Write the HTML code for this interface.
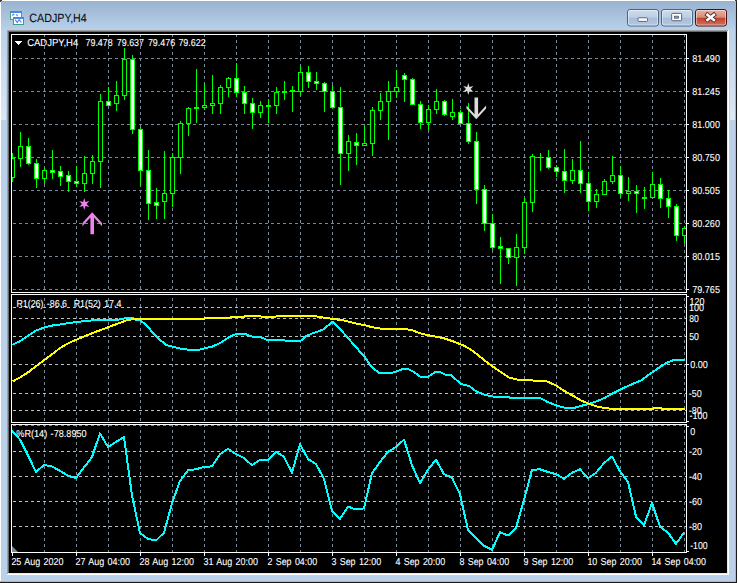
<!DOCTYPE html>
<html lang="en"><head><meta charset="utf-8"><title>CADJPY,H4</title>
<style>
html,body{margin:0;padding:0;background:#ffffff;overflow:hidden}
svg{display:block;font-family:"Liberation Sans",sans-serif}
text{text-rendering:geometricPrecision}
text.w{word-spacing:1px}
</style></head><body>
<svg width="739" height="583" viewBox="0 0 739 583">
<defs>
<linearGradient id="tg" x1="0" y1="0" x2="0" y2="1"><stop offset="0" stop-color="#98b3d0"/><stop offset="1" stop-color="#b9d1ea"/></linearGradient>
<linearGradient id="bt" x1="0" y1="0" x2="0" y2="1"><stop offset="0" stop-color="#cfdcec"/><stop offset="0.48" stop-color="#bccee4"/><stop offset="0.5" stop-color="#a6bcd8"/><stop offset="1" stop-color="#b4c9e2"/></linearGradient>
<linearGradient id="bc" x1="0" y1="0" x2="0" y2="1"><stop offset="0" stop-color="#eab3a6"/><stop offset="0.48" stop-color="#d98a78"/><stop offset="0.5" stop-color="#c2402a"/><stop offset="1" stop-color="#d4755f"/></linearGradient>
<linearGradient id="sg" gradientUnits="userSpaceOnUse" x1="0" y1="30" x2="0" y2="120"><stop offset="0" stop-color="#bbd2ea"/><stop offset="1" stop-color="#dce8f4"/></linearGradient>
<clipPath id="cm"><rect x="12" y="35" width="674" height="257"/></clipPath>
<clipPath id="c1"><rect x="12" y="295" width="674" height="127"/></clipPath>
<clipPath id="c2"><rect x="12" y="425" width="674" height="127"/></clipPath>
</defs>
<rect x="0" y="0" width="739" height="583" fill="#ffffff"/>
<rect x="0" y="0" width="737" height="583" fill="#1a1a1a"/>
<rect x="0" y="0" width="736" height="582" fill="#53d6ff"/>
<rect x="0" y="0" width="735" height="581" fill="#ffffff"/>
<rect x="1" y="1" width="734" height="580" fill="#b9d1ea"/>
<rect x="1" y="1" width="734" height="29" fill="url(#tg)"/>
<rect x="1" y="30" width="5" height="90" fill="url(#sg)"/>
<rect x="730" y="30" width="5" height="90" fill="url(#sg)"/>
<rect x="1" y="120" width="1" height="461" fill="#b7cee6"/>
<rect x="734" y="120" width="1" height="461" fill="#c3cfe9"/>
<rect x="2" y="580" width="733" height="1" fill="#c3cfe9"/>
<rect x="0" y="0" width="2" height="1" fill="#3a3a3a"/>
<rect x="0" y="1" width="1" height="1" fill="#3a3a3a"/>
<rect x="735" y="0" width="2" height="1" fill="#3a3a3a"/>
<rect x="736" y="1" width="1" height="1" fill="#3a3a3a"/>
<rect x="7" y="30" width="722" height="545" fill="#a0a0a0"/>
<rect x="8" y="31" width="721" height="544" fill="#696969"/>
<rect x="7" y="574" width="722" height="1" fill="#ffffff"/>
<rect x="728" y="30" width="1" height="545" fill="#ffffff"/>
<rect x="8" y="573" width="720" height="1" fill="#e8e8e8"/>
<rect x="727" y="31" width="1" height="543" fill="#e8e8e8"/>
<rect x="9" y="32" width="718" height="541" fill="#000000"/>
<g shape-rendering="crispEdges">
<rect x="10" y="11" width="12" height="9" fill="#4a86f5"/>
<rect x="11" y="13" width="10" height="6" fill="#ffffff"/>
<rect x="13" y="17" width="11" height="8" fill="#4a86f5"/>
<rect x="14" y="19" width="9" height="5" fill="#ffffff"/>
<rect x="11" y="11" width="1" height="1" fill="#3f9a78"/>
<rect x="13" y="11" width="1" height="1" fill="#3f9a78"/>
<rect x="15" y="11" width="1" height="1" fill="#3f9a78"/>
<rect x="17" y="11" width="1" height="1" fill="#3f9a78"/>
<rect x="19" y="11" width="1" height="1" fill="#3f9a78"/>
<rect x="21" y="11" width="1" height="1" fill="#3f9a78"/>
<rect x="10" y="12" width="1" height="1" fill="#3f9a78"/>
<rect x="10" y="14" width="1" height="1" fill="#3f9a78"/>
<rect x="10" y="16" width="1" height="1" fill="#3f9a78"/>
<rect x="10" y="18" width="1" height="1" fill="#3f9a78"/>
<rect x="14" y="17" width="1" height="1" fill="#3f9a78"/>
<rect x="14" y="24" width="1" height="1" fill="#3f9a78"/>
<rect x="16" y="17" width="1" height="1" fill="#3f9a78"/>
<rect x="16" y="24" width="1" height="1" fill="#3f9a78"/>
<rect x="18" y="17" width="1" height="1" fill="#3f9a78"/>
<rect x="18" y="24" width="1" height="1" fill="#3f9a78"/>
<rect x="20" y="17" width="1" height="1" fill="#3f9a78"/>
<rect x="20" y="24" width="1" height="1" fill="#3f9a78"/>
<rect x="22" y="17" width="1" height="1" fill="#3f9a78"/>
<rect x="22" y="24" width="1" height="1" fill="#3f9a78"/>
<rect x="13" y="18" width="1" height="1" fill="#3f9a78"/>
<rect x="23" y="18" width="1" height="1" fill="#3f9a78"/>
<rect x="13" y="20" width="1" height="1" fill="#3f9a78"/>
<rect x="23" y="20" width="1" height="1" fill="#3f9a78"/>
<rect x="13" y="22" width="1" height="1" fill="#3f9a78"/>
<rect x="23" y="22" width="1" height="1" fill="#3f9a78"/>
<rect x="13" y="24" width="1" height="1" fill="#3f9a78"/>
<rect x="23" y="24" width="1" height="1" fill="#3f9a78"/>
</g>
<path d="M12.2 15.6 l1.2 -1.4 l0.8 1 M16.2 14.3 l1.6 1.8" stroke="#4a86f5" stroke-width="1.1" fill="none"/>
<path d="M15.2 19.6 l2.1 2.9 l1.9 -3 l2.2 3" stroke="#4a86f5" stroke-width="1.1" fill="none"/>
<text x="29.3" y="22.4" font-size="12" fill="#0a0a14" text-anchor="start" xml:space="preserve" stroke="#0a0a14" stroke-width="0.1" textLength="57.5" lengthAdjust="spacingAndGlyphs">CADJPY,H4</text>
<rect x="627.5" y="9.5" width="31" height="16.5" rx="2.5" ry="2.5" fill="url(#bt)" stroke="#4f627c" stroke-width="1"/>
<rect x="628.5" y="10.5" width="29" height="14.5" rx="1.5" ry="1.5" fill="none" stroke="#ffffff" stroke-opacity="0.45" stroke-width="1"/>
<rect x="661.5" y="9.5" width="31" height="16.5" rx="2.5" ry="2.5" fill="url(#bt)" stroke="#4f627c" stroke-width="1"/>
<rect x="662.5" y="10.5" width="29" height="14.5" rx="1.5" ry="1.5" fill="none" stroke="#ffffff" stroke-opacity="0.45" stroke-width="1"/>
<rect x="695.5" y="9.5" width="31" height="16.5" rx="2.5" ry="2.5" fill="url(#bc)" stroke="#4a1014" stroke-width="1"/>
<rect x="696.5" y="10.5" width="29" height="14.5" rx="1.5" ry="1.5" fill="none" stroke="#ffffff" stroke-opacity="0.45" stroke-width="1"/>
<rect x="638" y="17.8" width="9.5" height="3.6" rx="0.8" fill="#ffffff" stroke="#4b5a70" stroke-width="0.9"/>
<rect x="671.7" y="13.4" width="9.9" height="7.3" rx="0.8" fill="#ffffff" stroke="#4b5a70" stroke-width="0.9"/>
<rect x="674.6" y="16.2" width="4" height="2" fill="#8fa6c4" stroke="#4b5a70" stroke-width="0.8"/>
<path d="M707.4 14.8 L713.9 19.9 M713.9 14.8 L707.4 19.9" stroke="#4a2a2a" stroke-width="4.2" stroke-linecap="square"/>
<path d="M707.4 14.8 L713.9 19.9 M713.9 14.8 L707.4 19.9" stroke="#ffffff" stroke-width="2.6" stroke-linecap="square"/>
<g shape-rendering="crispEdges">
<rect x="11" y="34" width="676" height="1" fill="#ffffff"/>
<rect x="11" y="292" width="676" height="1" fill="#ffffff"/>
<rect x="11" y="34" width="1" height="259" fill="#ffffff"/>
<rect x="686" y="34" width="1" height="259" fill="#ffffff"/>
<rect x="11" y="294" width="676" height="1" fill="#ffffff"/>
<rect x="11" y="422" width="676" height="1" fill="#ffffff"/>
<rect x="11" y="294" width="1" height="129" fill="#ffffff"/>
<rect x="686" y="294" width="1" height="129" fill="#ffffff"/>
<rect x="11" y="424" width="676" height="1" fill="#ffffff"/>
<rect x="11" y="552" width="676" height="1" fill="#ffffff"/>
<rect x="11" y="424" width="1" height="129" fill="#ffffff"/>
<rect x="686" y="424" width="1" height="129" fill="#ffffff"/>
<path d="M44.5 35v2M44.5 40v3M44.5 46v3M44.5 52v3M44.5 58v3M44.5 64v3M44.5 70v3M44.5 76v3M44.5 82v3M44.5 88v3M44.5 94v3M44.5 100v3M44.5 106v3M44.5 112v3M44.5 118v3M44.5 124v3M44.5 130v3M44.5 136v3M44.5 142v3M44.5 148v3M44.5 154v3M44.5 160v3M44.5 166v3M44.5 172v3M44.5 178v3M44.5 184v3M44.5 190v3M44.5 196v3M44.5 202v3M44.5 208v3M44.5 214v3M44.5 220v3M44.5 226v3M44.5 232v3M44.5 238v3M44.5 244v3M44.5 250v3M44.5 256v3M44.5 262v3M44.5 268v3M44.5 274v3M44.5 280v3M44.5 286v3" stroke="#778899" stroke-width="1" fill="none"/>
<path d="M44.5 298v3M44.5 304v3M44.5 310v3M44.5 316v3M44.5 322v3M44.5 328v3M44.5 334v3M44.5 340v3M44.5 346v3M44.5 352v3M44.5 358v3M44.5 364v3M44.5 370v3M44.5 376v3M44.5 382v3M44.5 388v3M44.5 394v3M44.5 400v3M44.5 406v3M44.5 412v3M44.5 418v3" stroke="#778899" stroke-width="1" fill="none"/>
<path d="M44.5 425v2M44.5 430v3M44.5 436v3M44.5 442v3M44.5 448v3M44.5 454v3M44.5 460v3M44.5 466v3M44.5 472v3M44.5 478v3M44.5 484v3M44.5 490v3M44.5 496v3M44.5 502v3M44.5 508v3M44.5 514v3M44.5 520v3M44.5 526v3M44.5 532v3M44.5 538v3M44.5 544v3M44.5 550v2" stroke="#778899" stroke-width="1" fill="none"/>
<path d="M76.5 35v2M76.5 40v3M76.5 46v3M76.5 52v3M76.5 58v3M76.5 64v3M76.5 70v3M76.5 76v3M76.5 82v3M76.5 88v3M76.5 94v3M76.5 100v3M76.5 106v3M76.5 112v3M76.5 118v3M76.5 124v3M76.5 130v3M76.5 136v3M76.5 142v3M76.5 148v3M76.5 154v3M76.5 160v3M76.5 166v3M76.5 172v3M76.5 178v3M76.5 184v3M76.5 190v3M76.5 196v3M76.5 202v3M76.5 208v3M76.5 214v3M76.5 220v3M76.5 226v3M76.5 232v3M76.5 238v3M76.5 244v3M76.5 250v3M76.5 256v3M76.5 262v3M76.5 268v3M76.5 274v3M76.5 280v3M76.5 286v3" stroke="#778899" stroke-width="1" fill="none"/>
<path d="M76.5 298v3M76.5 304v3M76.5 310v3M76.5 316v3M76.5 322v3M76.5 328v3M76.5 334v3M76.5 340v3M76.5 346v3M76.5 352v3M76.5 358v3M76.5 364v3M76.5 370v3M76.5 376v3M76.5 382v3M76.5 388v3M76.5 394v3M76.5 400v3M76.5 406v3M76.5 412v3M76.5 418v3" stroke="#778899" stroke-width="1" fill="none"/>
<path d="M76.5 425v2M76.5 430v3M76.5 436v3M76.5 442v3M76.5 448v3M76.5 454v3M76.5 460v3M76.5 466v3M76.5 472v3M76.5 478v3M76.5 484v3M76.5 490v3M76.5 496v3M76.5 502v3M76.5 508v3M76.5 514v3M76.5 520v3M76.5 526v3M76.5 532v3M76.5 538v3M76.5 544v3M76.5 550v2" stroke="#778899" stroke-width="1" fill="none"/>
<path d="M108.5 35v2M108.5 40v3M108.5 46v3M108.5 52v3M108.5 58v3M108.5 64v3M108.5 70v3M108.5 76v3M108.5 82v3M108.5 88v3M108.5 94v3M108.5 100v3M108.5 106v3M108.5 112v3M108.5 118v3M108.5 124v3M108.5 130v3M108.5 136v3M108.5 142v3M108.5 148v3M108.5 154v3M108.5 160v3M108.5 166v3M108.5 172v3M108.5 178v3M108.5 184v3M108.5 190v3M108.5 196v3M108.5 202v3M108.5 208v3M108.5 214v3M108.5 220v3M108.5 226v3M108.5 232v3M108.5 238v3M108.5 244v3M108.5 250v3M108.5 256v3M108.5 262v3M108.5 268v3M108.5 274v3M108.5 280v3M108.5 286v3" stroke="#778899" stroke-width="1" fill="none"/>
<path d="M108.5 298v3M108.5 304v3M108.5 310v3M108.5 316v3M108.5 322v3M108.5 328v3M108.5 334v3M108.5 340v3M108.5 346v3M108.5 352v3M108.5 358v3M108.5 364v3M108.5 370v3M108.5 376v3M108.5 382v3M108.5 388v3M108.5 394v3M108.5 400v3M108.5 406v3M108.5 412v3M108.5 418v3" stroke="#778899" stroke-width="1" fill="none"/>
<path d="M108.5 425v2M108.5 430v3M108.5 436v3M108.5 442v3M108.5 448v3M108.5 454v3M108.5 460v3M108.5 466v3M108.5 472v3M108.5 478v3M108.5 484v3M108.5 490v3M108.5 496v3M108.5 502v3M108.5 508v3M108.5 514v3M108.5 520v3M108.5 526v3M108.5 532v3M108.5 538v3M108.5 544v3M108.5 550v2" stroke="#778899" stroke-width="1" fill="none"/>
<path d="M140.5 35v2M140.5 40v3M140.5 46v3M140.5 52v3M140.5 58v3M140.5 64v3M140.5 70v3M140.5 76v3M140.5 82v3M140.5 88v3M140.5 94v3M140.5 100v3M140.5 106v3M140.5 112v3M140.5 118v3M140.5 124v3M140.5 130v3M140.5 136v3M140.5 142v3M140.5 148v3M140.5 154v3M140.5 160v3M140.5 166v3M140.5 172v3M140.5 178v3M140.5 184v3M140.5 190v3M140.5 196v3M140.5 202v3M140.5 208v3M140.5 214v3M140.5 220v3M140.5 226v3M140.5 232v3M140.5 238v3M140.5 244v3M140.5 250v3M140.5 256v3M140.5 262v3M140.5 268v3M140.5 274v3M140.5 280v3M140.5 286v3" stroke="#778899" stroke-width="1" fill="none"/>
<path d="M140.5 298v3M140.5 304v3M140.5 310v3M140.5 316v3M140.5 322v3M140.5 328v3M140.5 334v3M140.5 340v3M140.5 346v3M140.5 352v3M140.5 358v3M140.5 364v3M140.5 370v3M140.5 376v3M140.5 382v3M140.5 388v3M140.5 394v3M140.5 400v3M140.5 406v3M140.5 412v3M140.5 418v3" stroke="#778899" stroke-width="1" fill="none"/>
<path d="M140.5 425v2M140.5 430v3M140.5 436v3M140.5 442v3M140.5 448v3M140.5 454v3M140.5 460v3M140.5 466v3M140.5 472v3M140.5 478v3M140.5 484v3M140.5 490v3M140.5 496v3M140.5 502v3M140.5 508v3M140.5 514v3M140.5 520v3M140.5 526v3M140.5 532v3M140.5 538v3M140.5 544v3M140.5 550v2" stroke="#778899" stroke-width="1" fill="none"/>
<path d="M172.5 35v2M172.5 40v3M172.5 46v3M172.5 52v3M172.5 58v3M172.5 64v3M172.5 70v3M172.5 76v3M172.5 82v3M172.5 88v3M172.5 94v3M172.5 100v3M172.5 106v3M172.5 112v3M172.5 118v3M172.5 124v3M172.5 130v3M172.5 136v3M172.5 142v3M172.5 148v3M172.5 154v3M172.5 160v3M172.5 166v3M172.5 172v3M172.5 178v3M172.5 184v3M172.5 190v3M172.5 196v3M172.5 202v3M172.5 208v3M172.5 214v3M172.5 220v3M172.5 226v3M172.5 232v3M172.5 238v3M172.5 244v3M172.5 250v3M172.5 256v3M172.5 262v3M172.5 268v3M172.5 274v3M172.5 280v3M172.5 286v3" stroke="#778899" stroke-width="1" fill="none"/>
<path d="M172.5 298v3M172.5 304v3M172.5 310v3M172.5 316v3M172.5 322v3M172.5 328v3M172.5 334v3M172.5 340v3M172.5 346v3M172.5 352v3M172.5 358v3M172.5 364v3M172.5 370v3M172.5 376v3M172.5 382v3M172.5 388v3M172.5 394v3M172.5 400v3M172.5 406v3M172.5 412v3M172.5 418v3" stroke="#778899" stroke-width="1" fill="none"/>
<path d="M172.5 425v2M172.5 430v3M172.5 436v3M172.5 442v3M172.5 448v3M172.5 454v3M172.5 460v3M172.5 466v3M172.5 472v3M172.5 478v3M172.5 484v3M172.5 490v3M172.5 496v3M172.5 502v3M172.5 508v3M172.5 514v3M172.5 520v3M172.5 526v3M172.5 532v3M172.5 538v3M172.5 544v3M172.5 550v2" stroke="#778899" stroke-width="1" fill="none"/>
<path d="M204.5 35v2M204.5 40v3M204.5 46v3M204.5 52v3M204.5 58v3M204.5 64v3M204.5 70v3M204.5 76v3M204.5 82v3M204.5 88v3M204.5 94v3M204.5 100v3M204.5 106v3M204.5 112v3M204.5 118v3M204.5 124v3M204.5 130v3M204.5 136v3M204.5 142v3M204.5 148v3M204.5 154v3M204.5 160v3M204.5 166v3M204.5 172v3M204.5 178v3M204.5 184v3M204.5 190v3M204.5 196v3M204.5 202v3M204.5 208v3M204.5 214v3M204.5 220v3M204.5 226v3M204.5 232v3M204.5 238v3M204.5 244v3M204.5 250v3M204.5 256v3M204.5 262v3M204.5 268v3M204.5 274v3M204.5 280v3M204.5 286v3" stroke="#778899" stroke-width="1" fill="none"/>
<path d="M204.5 298v3M204.5 304v3M204.5 310v3M204.5 316v3M204.5 322v3M204.5 328v3M204.5 334v3M204.5 340v3M204.5 346v3M204.5 352v3M204.5 358v3M204.5 364v3M204.5 370v3M204.5 376v3M204.5 382v3M204.5 388v3M204.5 394v3M204.5 400v3M204.5 406v3M204.5 412v3M204.5 418v3" stroke="#778899" stroke-width="1" fill="none"/>
<path d="M204.5 425v2M204.5 430v3M204.5 436v3M204.5 442v3M204.5 448v3M204.5 454v3M204.5 460v3M204.5 466v3M204.5 472v3M204.5 478v3M204.5 484v3M204.5 490v3M204.5 496v3M204.5 502v3M204.5 508v3M204.5 514v3M204.5 520v3M204.5 526v3M204.5 532v3M204.5 538v3M204.5 544v3M204.5 550v2" stroke="#778899" stroke-width="1" fill="none"/>
<path d="M236.5 35v2M236.5 40v3M236.5 46v3M236.5 52v3M236.5 58v3M236.5 64v3M236.5 70v3M236.5 76v3M236.5 82v3M236.5 88v3M236.5 94v3M236.5 100v3M236.5 106v3M236.5 112v3M236.5 118v3M236.5 124v3M236.5 130v3M236.5 136v3M236.5 142v3M236.5 148v3M236.5 154v3M236.5 160v3M236.5 166v3M236.5 172v3M236.5 178v3M236.5 184v3M236.5 190v3M236.5 196v3M236.5 202v3M236.5 208v3M236.5 214v3M236.5 220v3M236.5 226v3M236.5 232v3M236.5 238v3M236.5 244v3M236.5 250v3M236.5 256v3M236.5 262v3M236.5 268v3M236.5 274v3M236.5 280v3M236.5 286v3" stroke="#778899" stroke-width="1" fill="none"/>
<path d="M236.5 298v3M236.5 304v3M236.5 310v3M236.5 316v3M236.5 322v3M236.5 328v3M236.5 334v3M236.5 340v3M236.5 346v3M236.5 352v3M236.5 358v3M236.5 364v3M236.5 370v3M236.5 376v3M236.5 382v3M236.5 388v3M236.5 394v3M236.5 400v3M236.5 406v3M236.5 412v3M236.5 418v3" stroke="#778899" stroke-width="1" fill="none"/>
<path d="M236.5 425v2M236.5 430v3M236.5 436v3M236.5 442v3M236.5 448v3M236.5 454v3M236.5 460v3M236.5 466v3M236.5 472v3M236.5 478v3M236.5 484v3M236.5 490v3M236.5 496v3M236.5 502v3M236.5 508v3M236.5 514v3M236.5 520v3M236.5 526v3M236.5 532v3M236.5 538v3M236.5 544v3M236.5 550v2" stroke="#778899" stroke-width="1" fill="none"/>
<path d="M268.5 35v2M268.5 40v3M268.5 46v3M268.5 52v3M268.5 58v3M268.5 64v3M268.5 70v3M268.5 76v3M268.5 82v3M268.5 88v3M268.5 94v3M268.5 100v3M268.5 106v3M268.5 112v3M268.5 118v3M268.5 124v3M268.5 130v3M268.5 136v3M268.5 142v3M268.5 148v3M268.5 154v3M268.5 160v3M268.5 166v3M268.5 172v3M268.5 178v3M268.5 184v3M268.5 190v3M268.5 196v3M268.5 202v3M268.5 208v3M268.5 214v3M268.5 220v3M268.5 226v3M268.5 232v3M268.5 238v3M268.5 244v3M268.5 250v3M268.5 256v3M268.5 262v3M268.5 268v3M268.5 274v3M268.5 280v3M268.5 286v3" stroke="#778899" stroke-width="1" fill="none"/>
<path d="M268.5 298v3M268.5 304v3M268.5 310v3M268.5 316v3M268.5 322v3M268.5 328v3M268.5 334v3M268.5 340v3M268.5 346v3M268.5 352v3M268.5 358v3M268.5 364v3M268.5 370v3M268.5 376v3M268.5 382v3M268.5 388v3M268.5 394v3M268.5 400v3M268.5 406v3M268.5 412v3M268.5 418v3" stroke="#778899" stroke-width="1" fill="none"/>
<path d="M268.5 425v2M268.5 430v3M268.5 436v3M268.5 442v3M268.5 448v3M268.5 454v3M268.5 460v3M268.5 466v3M268.5 472v3M268.5 478v3M268.5 484v3M268.5 490v3M268.5 496v3M268.5 502v3M268.5 508v3M268.5 514v3M268.5 520v3M268.5 526v3M268.5 532v3M268.5 538v3M268.5 544v3M268.5 550v2" stroke="#778899" stroke-width="1" fill="none"/>
<path d="M300.5 35v2M300.5 40v3M300.5 46v3M300.5 52v3M300.5 58v3M300.5 64v3M300.5 70v3M300.5 76v3M300.5 82v3M300.5 88v3M300.5 94v3M300.5 100v3M300.5 106v3M300.5 112v3M300.5 118v3M300.5 124v3M300.5 130v3M300.5 136v3M300.5 142v3M300.5 148v3M300.5 154v3M300.5 160v3M300.5 166v3M300.5 172v3M300.5 178v3M300.5 184v3M300.5 190v3M300.5 196v3M300.5 202v3M300.5 208v3M300.5 214v3M300.5 220v3M300.5 226v3M300.5 232v3M300.5 238v3M300.5 244v3M300.5 250v3M300.5 256v3M300.5 262v3M300.5 268v3M300.5 274v3M300.5 280v3M300.5 286v3" stroke="#778899" stroke-width="1" fill="none"/>
<path d="M300.5 298v3M300.5 304v3M300.5 310v3M300.5 316v3M300.5 322v3M300.5 328v3M300.5 334v3M300.5 340v3M300.5 346v3M300.5 352v3M300.5 358v3M300.5 364v3M300.5 370v3M300.5 376v3M300.5 382v3M300.5 388v3M300.5 394v3M300.5 400v3M300.5 406v3M300.5 412v3M300.5 418v3" stroke="#778899" stroke-width="1" fill="none"/>
<path d="M300.5 425v2M300.5 430v3M300.5 436v3M300.5 442v3M300.5 448v3M300.5 454v3M300.5 460v3M300.5 466v3M300.5 472v3M300.5 478v3M300.5 484v3M300.5 490v3M300.5 496v3M300.5 502v3M300.5 508v3M300.5 514v3M300.5 520v3M300.5 526v3M300.5 532v3M300.5 538v3M300.5 544v3M300.5 550v2" stroke="#778899" stroke-width="1" fill="none"/>
<path d="M332.5 35v2M332.5 40v3M332.5 46v3M332.5 52v3M332.5 58v3M332.5 64v3M332.5 70v3M332.5 76v3M332.5 82v3M332.5 88v3M332.5 94v3M332.5 100v3M332.5 106v3M332.5 112v3M332.5 118v3M332.5 124v3M332.5 130v3M332.5 136v3M332.5 142v3M332.5 148v3M332.5 154v3M332.5 160v3M332.5 166v3M332.5 172v3M332.5 178v3M332.5 184v3M332.5 190v3M332.5 196v3M332.5 202v3M332.5 208v3M332.5 214v3M332.5 220v3M332.5 226v3M332.5 232v3M332.5 238v3M332.5 244v3M332.5 250v3M332.5 256v3M332.5 262v3M332.5 268v3M332.5 274v3M332.5 280v3M332.5 286v3" stroke="#778899" stroke-width="1" fill="none"/>
<path d="M332.5 298v3M332.5 304v3M332.5 310v3M332.5 316v3M332.5 322v3M332.5 328v3M332.5 334v3M332.5 340v3M332.5 346v3M332.5 352v3M332.5 358v3M332.5 364v3M332.5 370v3M332.5 376v3M332.5 382v3M332.5 388v3M332.5 394v3M332.5 400v3M332.5 406v3M332.5 412v3M332.5 418v3" stroke="#778899" stroke-width="1" fill="none"/>
<path d="M332.5 425v2M332.5 430v3M332.5 436v3M332.5 442v3M332.5 448v3M332.5 454v3M332.5 460v3M332.5 466v3M332.5 472v3M332.5 478v3M332.5 484v3M332.5 490v3M332.5 496v3M332.5 502v3M332.5 508v3M332.5 514v3M332.5 520v3M332.5 526v3M332.5 532v3M332.5 538v3M332.5 544v3M332.5 550v2" stroke="#778899" stroke-width="1" fill="none"/>
<path d="M364.5 35v2M364.5 40v3M364.5 46v3M364.5 52v3M364.5 58v3M364.5 64v3M364.5 70v3M364.5 76v3M364.5 82v3M364.5 88v3M364.5 94v3M364.5 100v3M364.5 106v3M364.5 112v3M364.5 118v3M364.5 124v3M364.5 130v3M364.5 136v3M364.5 142v3M364.5 148v3M364.5 154v3M364.5 160v3M364.5 166v3M364.5 172v3M364.5 178v3M364.5 184v3M364.5 190v3M364.5 196v3M364.5 202v3M364.5 208v3M364.5 214v3M364.5 220v3M364.5 226v3M364.5 232v3M364.5 238v3M364.5 244v3M364.5 250v3M364.5 256v3M364.5 262v3M364.5 268v3M364.5 274v3M364.5 280v3M364.5 286v3" stroke="#778899" stroke-width="1" fill="none"/>
<path d="M364.5 298v3M364.5 304v3M364.5 310v3M364.5 316v3M364.5 322v3M364.5 328v3M364.5 334v3M364.5 340v3M364.5 346v3M364.5 352v3M364.5 358v3M364.5 364v3M364.5 370v3M364.5 376v3M364.5 382v3M364.5 388v3M364.5 394v3M364.5 400v3M364.5 406v3M364.5 412v3M364.5 418v3" stroke="#778899" stroke-width="1" fill="none"/>
<path d="M364.5 425v2M364.5 430v3M364.5 436v3M364.5 442v3M364.5 448v3M364.5 454v3M364.5 460v3M364.5 466v3M364.5 472v3M364.5 478v3M364.5 484v3M364.5 490v3M364.5 496v3M364.5 502v3M364.5 508v3M364.5 514v3M364.5 520v3M364.5 526v3M364.5 532v3M364.5 538v3M364.5 544v3M364.5 550v2" stroke="#778899" stroke-width="1" fill="none"/>
<path d="M396.5 35v2M396.5 40v3M396.5 46v3M396.5 52v3M396.5 58v3M396.5 64v3M396.5 70v3M396.5 76v3M396.5 82v3M396.5 88v3M396.5 94v3M396.5 100v3M396.5 106v3M396.5 112v3M396.5 118v3M396.5 124v3M396.5 130v3M396.5 136v3M396.5 142v3M396.5 148v3M396.5 154v3M396.5 160v3M396.5 166v3M396.5 172v3M396.5 178v3M396.5 184v3M396.5 190v3M396.5 196v3M396.5 202v3M396.5 208v3M396.5 214v3M396.5 220v3M396.5 226v3M396.5 232v3M396.5 238v3M396.5 244v3M396.5 250v3M396.5 256v3M396.5 262v3M396.5 268v3M396.5 274v3M396.5 280v3M396.5 286v3" stroke="#778899" stroke-width="1" fill="none"/>
<path d="M396.5 298v3M396.5 304v3M396.5 310v3M396.5 316v3M396.5 322v3M396.5 328v3M396.5 334v3M396.5 340v3M396.5 346v3M396.5 352v3M396.5 358v3M396.5 364v3M396.5 370v3M396.5 376v3M396.5 382v3M396.5 388v3M396.5 394v3M396.5 400v3M396.5 406v3M396.5 412v3M396.5 418v3" stroke="#778899" stroke-width="1" fill="none"/>
<path d="M396.5 425v2M396.5 430v3M396.5 436v3M396.5 442v3M396.5 448v3M396.5 454v3M396.5 460v3M396.5 466v3M396.5 472v3M396.5 478v3M396.5 484v3M396.5 490v3M396.5 496v3M396.5 502v3M396.5 508v3M396.5 514v3M396.5 520v3M396.5 526v3M396.5 532v3M396.5 538v3M396.5 544v3M396.5 550v2" stroke="#778899" stroke-width="1" fill="none"/>
<path d="M428.5 35v2M428.5 40v3M428.5 46v3M428.5 52v3M428.5 58v3M428.5 64v3M428.5 70v3M428.5 76v3M428.5 82v3M428.5 88v3M428.5 94v3M428.5 100v3M428.5 106v3M428.5 112v3M428.5 118v3M428.5 124v3M428.5 130v3M428.5 136v3M428.5 142v3M428.5 148v3M428.5 154v3M428.5 160v3M428.5 166v3M428.5 172v3M428.5 178v3M428.5 184v3M428.5 190v3M428.5 196v3M428.5 202v3M428.5 208v3M428.5 214v3M428.5 220v3M428.5 226v3M428.5 232v3M428.5 238v3M428.5 244v3M428.5 250v3M428.5 256v3M428.5 262v3M428.5 268v3M428.5 274v3M428.5 280v3M428.5 286v3" stroke="#778899" stroke-width="1" fill="none"/>
<path d="M428.5 298v3M428.5 304v3M428.5 310v3M428.5 316v3M428.5 322v3M428.5 328v3M428.5 334v3M428.5 340v3M428.5 346v3M428.5 352v3M428.5 358v3M428.5 364v3M428.5 370v3M428.5 376v3M428.5 382v3M428.5 388v3M428.5 394v3M428.5 400v3M428.5 406v3M428.5 412v3M428.5 418v3" stroke="#778899" stroke-width="1" fill="none"/>
<path d="M428.5 425v2M428.5 430v3M428.5 436v3M428.5 442v3M428.5 448v3M428.5 454v3M428.5 460v3M428.5 466v3M428.5 472v3M428.5 478v3M428.5 484v3M428.5 490v3M428.5 496v3M428.5 502v3M428.5 508v3M428.5 514v3M428.5 520v3M428.5 526v3M428.5 532v3M428.5 538v3M428.5 544v3M428.5 550v2" stroke="#778899" stroke-width="1" fill="none"/>
<path d="M460.5 35v2M460.5 40v3M460.5 46v3M460.5 52v3M460.5 58v3M460.5 64v3M460.5 70v3M460.5 76v3M460.5 82v3M460.5 88v3M460.5 94v3M460.5 100v3M460.5 106v3M460.5 112v3M460.5 118v3M460.5 124v3M460.5 130v3M460.5 136v3M460.5 142v3M460.5 148v3M460.5 154v3M460.5 160v3M460.5 166v3M460.5 172v3M460.5 178v3M460.5 184v3M460.5 190v3M460.5 196v3M460.5 202v3M460.5 208v3M460.5 214v3M460.5 220v3M460.5 226v3M460.5 232v3M460.5 238v3M460.5 244v3M460.5 250v3M460.5 256v3M460.5 262v3M460.5 268v3M460.5 274v3M460.5 280v3M460.5 286v3" stroke="#778899" stroke-width="1" fill="none"/>
<path d="M460.5 298v3M460.5 304v3M460.5 310v3M460.5 316v3M460.5 322v3M460.5 328v3M460.5 334v3M460.5 340v3M460.5 346v3M460.5 352v3M460.5 358v3M460.5 364v3M460.5 370v3M460.5 376v3M460.5 382v3M460.5 388v3M460.5 394v3M460.5 400v3M460.5 406v3M460.5 412v3M460.5 418v3" stroke="#778899" stroke-width="1" fill="none"/>
<path d="M460.5 425v2M460.5 430v3M460.5 436v3M460.5 442v3M460.5 448v3M460.5 454v3M460.5 460v3M460.5 466v3M460.5 472v3M460.5 478v3M460.5 484v3M460.5 490v3M460.5 496v3M460.5 502v3M460.5 508v3M460.5 514v3M460.5 520v3M460.5 526v3M460.5 532v3M460.5 538v3M460.5 544v3M460.5 550v2" stroke="#778899" stroke-width="1" fill="none"/>
<path d="M492.5 35v2M492.5 40v3M492.5 46v3M492.5 52v3M492.5 58v3M492.5 64v3M492.5 70v3M492.5 76v3M492.5 82v3M492.5 88v3M492.5 94v3M492.5 100v3M492.5 106v3M492.5 112v3M492.5 118v3M492.5 124v3M492.5 130v3M492.5 136v3M492.5 142v3M492.5 148v3M492.5 154v3M492.5 160v3M492.5 166v3M492.5 172v3M492.5 178v3M492.5 184v3M492.5 190v3M492.5 196v3M492.5 202v3M492.5 208v3M492.5 214v3M492.5 220v3M492.5 226v3M492.5 232v3M492.5 238v3M492.5 244v3M492.5 250v3M492.5 256v3M492.5 262v3M492.5 268v3M492.5 274v3M492.5 280v3M492.5 286v3" stroke="#778899" stroke-width="1" fill="none"/>
<path d="M492.5 298v3M492.5 304v3M492.5 310v3M492.5 316v3M492.5 322v3M492.5 328v3M492.5 334v3M492.5 340v3M492.5 346v3M492.5 352v3M492.5 358v3M492.5 364v3M492.5 370v3M492.5 376v3M492.5 382v3M492.5 388v3M492.5 394v3M492.5 400v3M492.5 406v3M492.5 412v3M492.5 418v3" stroke="#778899" stroke-width="1" fill="none"/>
<path d="M492.5 425v2M492.5 430v3M492.5 436v3M492.5 442v3M492.5 448v3M492.5 454v3M492.5 460v3M492.5 466v3M492.5 472v3M492.5 478v3M492.5 484v3M492.5 490v3M492.5 496v3M492.5 502v3M492.5 508v3M492.5 514v3M492.5 520v3M492.5 526v3M492.5 532v3M492.5 538v3M492.5 544v3M492.5 550v2" stroke="#778899" stroke-width="1" fill="none"/>
<path d="M524.5 35v2M524.5 40v3M524.5 46v3M524.5 52v3M524.5 58v3M524.5 64v3M524.5 70v3M524.5 76v3M524.5 82v3M524.5 88v3M524.5 94v3M524.5 100v3M524.5 106v3M524.5 112v3M524.5 118v3M524.5 124v3M524.5 130v3M524.5 136v3M524.5 142v3M524.5 148v3M524.5 154v3M524.5 160v3M524.5 166v3M524.5 172v3M524.5 178v3M524.5 184v3M524.5 190v3M524.5 196v3M524.5 202v3M524.5 208v3M524.5 214v3M524.5 220v3M524.5 226v3M524.5 232v3M524.5 238v3M524.5 244v3M524.5 250v3M524.5 256v3M524.5 262v3M524.5 268v3M524.5 274v3M524.5 280v3M524.5 286v3" stroke="#778899" stroke-width="1" fill="none"/>
<path d="M524.5 298v3M524.5 304v3M524.5 310v3M524.5 316v3M524.5 322v3M524.5 328v3M524.5 334v3M524.5 340v3M524.5 346v3M524.5 352v3M524.5 358v3M524.5 364v3M524.5 370v3M524.5 376v3M524.5 382v3M524.5 388v3M524.5 394v3M524.5 400v3M524.5 406v3M524.5 412v3M524.5 418v3" stroke="#778899" stroke-width="1" fill="none"/>
<path d="M524.5 425v2M524.5 430v3M524.5 436v3M524.5 442v3M524.5 448v3M524.5 454v3M524.5 460v3M524.5 466v3M524.5 472v3M524.5 478v3M524.5 484v3M524.5 490v3M524.5 496v3M524.5 502v3M524.5 508v3M524.5 514v3M524.5 520v3M524.5 526v3M524.5 532v3M524.5 538v3M524.5 544v3M524.5 550v2" stroke="#778899" stroke-width="1" fill="none"/>
<path d="M556.5 35v2M556.5 40v3M556.5 46v3M556.5 52v3M556.5 58v3M556.5 64v3M556.5 70v3M556.5 76v3M556.5 82v3M556.5 88v3M556.5 94v3M556.5 100v3M556.5 106v3M556.5 112v3M556.5 118v3M556.5 124v3M556.5 130v3M556.5 136v3M556.5 142v3M556.5 148v3M556.5 154v3M556.5 160v3M556.5 166v3M556.5 172v3M556.5 178v3M556.5 184v3M556.5 190v3M556.5 196v3M556.5 202v3M556.5 208v3M556.5 214v3M556.5 220v3M556.5 226v3M556.5 232v3M556.5 238v3M556.5 244v3M556.5 250v3M556.5 256v3M556.5 262v3M556.5 268v3M556.5 274v3M556.5 280v3M556.5 286v3" stroke="#778899" stroke-width="1" fill="none"/>
<path d="M556.5 298v3M556.5 304v3M556.5 310v3M556.5 316v3M556.5 322v3M556.5 328v3M556.5 334v3M556.5 340v3M556.5 346v3M556.5 352v3M556.5 358v3M556.5 364v3M556.5 370v3M556.5 376v3M556.5 382v3M556.5 388v3M556.5 394v3M556.5 400v3M556.5 406v3M556.5 412v3M556.5 418v3" stroke="#778899" stroke-width="1" fill="none"/>
<path d="M556.5 425v2M556.5 430v3M556.5 436v3M556.5 442v3M556.5 448v3M556.5 454v3M556.5 460v3M556.5 466v3M556.5 472v3M556.5 478v3M556.5 484v3M556.5 490v3M556.5 496v3M556.5 502v3M556.5 508v3M556.5 514v3M556.5 520v3M556.5 526v3M556.5 532v3M556.5 538v3M556.5 544v3M556.5 550v2" stroke="#778899" stroke-width="1" fill="none"/>
<path d="M588.5 35v2M588.5 40v3M588.5 46v3M588.5 52v3M588.5 58v3M588.5 64v3M588.5 70v3M588.5 76v3M588.5 82v3M588.5 88v3M588.5 94v3M588.5 100v3M588.5 106v3M588.5 112v3M588.5 118v3M588.5 124v3M588.5 130v3M588.5 136v3M588.5 142v3M588.5 148v3M588.5 154v3M588.5 160v3M588.5 166v3M588.5 172v3M588.5 178v3M588.5 184v3M588.5 190v3M588.5 196v3M588.5 202v3M588.5 208v3M588.5 214v3M588.5 220v3M588.5 226v3M588.5 232v3M588.5 238v3M588.5 244v3M588.5 250v3M588.5 256v3M588.5 262v3M588.5 268v3M588.5 274v3M588.5 280v3M588.5 286v3" stroke="#778899" stroke-width="1" fill="none"/>
<path d="M588.5 298v3M588.5 304v3M588.5 310v3M588.5 316v3M588.5 322v3M588.5 328v3M588.5 334v3M588.5 340v3M588.5 346v3M588.5 352v3M588.5 358v3M588.5 364v3M588.5 370v3M588.5 376v3M588.5 382v3M588.5 388v3M588.5 394v3M588.5 400v3M588.5 406v3M588.5 412v3M588.5 418v3" stroke="#778899" stroke-width="1" fill="none"/>
<path d="M588.5 425v2M588.5 430v3M588.5 436v3M588.5 442v3M588.5 448v3M588.5 454v3M588.5 460v3M588.5 466v3M588.5 472v3M588.5 478v3M588.5 484v3M588.5 490v3M588.5 496v3M588.5 502v3M588.5 508v3M588.5 514v3M588.5 520v3M588.5 526v3M588.5 532v3M588.5 538v3M588.5 544v3M588.5 550v2" stroke="#778899" stroke-width="1" fill="none"/>
<path d="M620.5 35v2M620.5 40v3M620.5 46v3M620.5 52v3M620.5 58v3M620.5 64v3M620.5 70v3M620.5 76v3M620.5 82v3M620.5 88v3M620.5 94v3M620.5 100v3M620.5 106v3M620.5 112v3M620.5 118v3M620.5 124v3M620.5 130v3M620.5 136v3M620.5 142v3M620.5 148v3M620.5 154v3M620.5 160v3M620.5 166v3M620.5 172v3M620.5 178v3M620.5 184v3M620.5 190v3M620.5 196v3M620.5 202v3M620.5 208v3M620.5 214v3M620.5 220v3M620.5 226v3M620.5 232v3M620.5 238v3M620.5 244v3M620.5 250v3M620.5 256v3M620.5 262v3M620.5 268v3M620.5 274v3M620.5 280v3M620.5 286v3" stroke="#778899" stroke-width="1" fill="none"/>
<path d="M620.5 298v3M620.5 304v3M620.5 310v3M620.5 316v3M620.5 322v3M620.5 328v3M620.5 334v3M620.5 340v3M620.5 346v3M620.5 352v3M620.5 358v3M620.5 364v3M620.5 370v3M620.5 376v3M620.5 382v3M620.5 388v3M620.5 394v3M620.5 400v3M620.5 406v3M620.5 412v3M620.5 418v3" stroke="#778899" stroke-width="1" fill="none"/>
<path d="M620.5 425v2M620.5 430v3M620.5 436v3M620.5 442v3M620.5 448v3M620.5 454v3M620.5 460v3M620.5 466v3M620.5 472v3M620.5 478v3M620.5 484v3M620.5 490v3M620.5 496v3M620.5 502v3M620.5 508v3M620.5 514v3M620.5 520v3M620.5 526v3M620.5 532v3M620.5 538v3M620.5 544v3M620.5 550v2" stroke="#778899" stroke-width="1" fill="none"/>
<path d="M652.5 35v2M652.5 40v3M652.5 46v3M652.5 52v3M652.5 58v3M652.5 64v3M652.5 70v3M652.5 76v3M652.5 82v3M652.5 88v3M652.5 94v3M652.5 100v3M652.5 106v3M652.5 112v3M652.5 118v3M652.5 124v3M652.5 130v3M652.5 136v3M652.5 142v3M652.5 148v3M652.5 154v3M652.5 160v3M652.5 166v3M652.5 172v3M652.5 178v3M652.5 184v3M652.5 190v3M652.5 196v3M652.5 202v3M652.5 208v3M652.5 214v3M652.5 220v3M652.5 226v3M652.5 232v3M652.5 238v3M652.5 244v3M652.5 250v3M652.5 256v3M652.5 262v3M652.5 268v3M652.5 274v3M652.5 280v3M652.5 286v3" stroke="#778899" stroke-width="1" fill="none"/>
<path d="M652.5 298v3M652.5 304v3M652.5 310v3M652.5 316v3M652.5 322v3M652.5 328v3M652.5 334v3M652.5 340v3M652.5 346v3M652.5 352v3M652.5 358v3M652.5 364v3M652.5 370v3M652.5 376v3M652.5 382v3M652.5 388v3M652.5 394v3M652.5 400v3M652.5 406v3M652.5 412v3M652.5 418v3" stroke="#778899" stroke-width="1" fill="none"/>
<path d="M652.5 425v2M652.5 430v3M652.5 436v3M652.5 442v3M652.5 448v3M652.5 454v3M652.5 460v3M652.5 466v3M652.5 472v3M652.5 478v3M652.5 484v3M652.5 490v3M652.5 496v3M652.5 502v3M652.5 508v3M652.5 514v3M652.5 520v3M652.5 526v3M652.5 532v3M652.5 538v3M652.5 544v3M652.5 550v2" stroke="#778899" stroke-width="1" fill="none"/>
<path d="M684.5 35v2M684.5 40v3M684.5 46v3M684.5 52v3M684.5 58v3M684.5 64v3M684.5 70v3M684.5 76v3M684.5 82v3M684.5 88v3M684.5 94v3M684.5 100v3M684.5 106v3M684.5 112v3M684.5 118v3M684.5 124v3M684.5 130v3M684.5 136v3M684.5 142v3M684.5 148v3M684.5 154v3M684.5 160v3M684.5 166v3M684.5 172v3M684.5 178v3M684.5 184v3M684.5 190v3M684.5 196v3M684.5 202v3M684.5 208v3M684.5 214v3M684.5 220v3M684.5 226v3M684.5 232v3M684.5 238v3M684.5 244v3M684.5 250v3M684.5 256v3M684.5 262v3M684.5 268v3M684.5 274v3M684.5 280v3M684.5 286v3" stroke="#778899" stroke-width="1" fill="none"/>
<path d="M684.5 298v3M684.5 304v3M684.5 310v3M684.5 316v3M684.5 322v3M684.5 328v3M684.5 334v3M684.5 340v3M684.5 346v3M684.5 352v3M684.5 358v3M684.5 364v3M684.5 370v3M684.5 376v3M684.5 382v3M684.5 388v3M684.5 394v3M684.5 400v3M684.5 406v3M684.5 412v3M684.5 418v3" stroke="#778899" stroke-width="1" fill="none"/>
<path d="M684.5 425v2M684.5 430v3M684.5 436v3M684.5 442v3M684.5 448v3M684.5 454v3M684.5 460v3M684.5 466v3M684.5 472v3M684.5 478v3M684.5 484v3M684.5 490v3M684.5 496v3M684.5 502v3M684.5 508v3M684.5 514v3M684.5 520v3M684.5 526v3M684.5 532v3M684.5 538v3M684.5 544v3M684.5 550v2" stroke="#778899" stroke-width="1" fill="none"/>
<path d="M13 58.5h3M19 58.5h3M25 58.5h3M31 58.5h3M37 58.5h3M43 58.5h3M49 58.5h3M55 58.5h3M61 58.5h3M67 58.5h3M73 58.5h3M79 58.5h3M85 58.5h3M91 58.5h3M97 58.5h3M103 58.5h3M109 58.5h3M115 58.5h3M121 58.5h3M127 58.5h3M133 58.5h3M139 58.5h3M145 58.5h3M151 58.5h3M157 58.5h3M163 58.5h3M169 58.5h3M175 58.5h3M181 58.5h3M187 58.5h3M193 58.5h3M199 58.5h3M205 58.5h3M211 58.5h3M217 58.5h3M223 58.5h3M229 58.5h3M235 58.5h3M241 58.5h3M247 58.5h3M253 58.5h3M259 58.5h3M265 58.5h3M271 58.5h3M277 58.5h3M283 58.5h3M289 58.5h3M295 58.5h3M301 58.5h3M307 58.5h3M313 58.5h3M319 58.5h3M325 58.5h3M331 58.5h3M337 58.5h3M343 58.5h3M349 58.5h3M355 58.5h3M361 58.5h3M367 58.5h3M373 58.5h3M379 58.5h3M385 58.5h3M391 58.5h3M397 58.5h3M403 58.5h3M409 58.5h3M415 58.5h3M421 58.5h3M427 58.5h3M433 58.5h3M439 58.5h3M445 58.5h3M451 58.5h3M457 58.5h3M463 58.5h3M469 58.5h3M475 58.5h3M481 58.5h3M487 58.5h3M493 58.5h3M499 58.5h3M505 58.5h3M511 58.5h3M517 58.5h3M523 58.5h3M529 58.5h3M535 58.5h3M541 58.5h3M547 58.5h3M553 58.5h3M559 58.5h3M565 58.5h3M571 58.5h3M577 58.5h3M583 58.5h3M589 58.5h3M595 58.5h3M601 58.5h3M607 58.5h3M613 58.5h3M619 58.5h3M625 58.5h3M631 58.5h3M637 58.5h3M643 58.5h3M649 58.5h3M655 58.5h3M661 58.5h3M667 58.5h3M673 58.5h3M679 58.5h3M685 58.5h1" stroke="#778899" stroke-width="1" fill="none"/>
<path d="M13 91.5h3M19 91.5h3M25 91.5h3M31 91.5h3M37 91.5h3M43 91.5h3M49 91.5h3M55 91.5h3M61 91.5h3M67 91.5h3M73 91.5h3M79 91.5h3M85 91.5h3M91 91.5h3M97 91.5h3M103 91.5h3M109 91.5h3M115 91.5h3M121 91.5h3M127 91.5h3M133 91.5h3M139 91.5h3M145 91.5h3M151 91.5h3M157 91.5h3M163 91.5h3M169 91.5h3M175 91.5h3M181 91.5h3M187 91.5h3M193 91.5h3M199 91.5h3M205 91.5h3M211 91.5h3M217 91.5h3M223 91.5h3M229 91.5h3M235 91.5h3M241 91.5h3M247 91.5h3M253 91.5h3M259 91.5h3M265 91.5h3M271 91.5h3M277 91.5h3M283 91.5h3M289 91.5h3M295 91.5h3M301 91.5h3M307 91.5h3M313 91.5h3M319 91.5h3M325 91.5h3M331 91.5h3M337 91.5h3M343 91.5h3M349 91.5h3M355 91.5h3M361 91.5h3M367 91.5h3M373 91.5h3M379 91.5h3M385 91.5h3M391 91.5h3M397 91.5h3M403 91.5h3M409 91.5h3M415 91.5h3M421 91.5h3M427 91.5h3M433 91.5h3M439 91.5h3M445 91.5h3M451 91.5h3M457 91.5h3M463 91.5h3M469 91.5h3M475 91.5h3M481 91.5h3M487 91.5h3M493 91.5h3M499 91.5h3M505 91.5h3M511 91.5h3M517 91.5h3M523 91.5h3M529 91.5h3M535 91.5h3M541 91.5h3M547 91.5h3M553 91.5h3M559 91.5h3M565 91.5h3M571 91.5h3M577 91.5h3M583 91.5h3M589 91.5h3M595 91.5h3M601 91.5h3M607 91.5h3M613 91.5h3M619 91.5h3M625 91.5h3M631 91.5h3M637 91.5h3M643 91.5h3M649 91.5h3M655 91.5h3M661 91.5h3M667 91.5h3M673 91.5h3M679 91.5h3M685 91.5h1" stroke="#778899" stroke-width="1" fill="none"/>
<path d="M13 124.5h3M19 124.5h3M25 124.5h3M31 124.5h3M37 124.5h3M43 124.5h3M49 124.5h3M55 124.5h3M61 124.5h3M67 124.5h3M73 124.5h3M79 124.5h3M85 124.5h3M91 124.5h3M97 124.5h3M103 124.5h3M109 124.5h3M115 124.5h3M121 124.5h3M127 124.5h3M133 124.5h3M139 124.5h3M145 124.5h3M151 124.5h3M157 124.5h3M163 124.5h3M169 124.5h3M175 124.5h3M181 124.5h3M187 124.5h3M193 124.5h3M199 124.5h3M205 124.5h3M211 124.5h3M217 124.5h3M223 124.5h3M229 124.5h3M235 124.5h3M241 124.5h3M247 124.5h3M253 124.5h3M259 124.5h3M265 124.5h3M271 124.5h3M277 124.5h3M283 124.5h3M289 124.5h3M295 124.5h3M301 124.5h3M307 124.5h3M313 124.5h3M319 124.5h3M325 124.5h3M331 124.5h3M337 124.5h3M343 124.5h3M349 124.5h3M355 124.5h3M361 124.5h3M367 124.5h3M373 124.5h3M379 124.5h3M385 124.5h3M391 124.5h3M397 124.5h3M403 124.5h3M409 124.5h3M415 124.5h3M421 124.5h3M427 124.5h3M433 124.5h3M439 124.5h3M445 124.5h3M451 124.5h3M457 124.5h3M463 124.5h3M469 124.5h3M475 124.5h3M481 124.5h3M487 124.5h3M493 124.5h3M499 124.5h3M505 124.5h3M511 124.5h3M517 124.5h3M523 124.5h3M529 124.5h3M535 124.5h3M541 124.5h3M547 124.5h3M553 124.5h3M559 124.5h3M565 124.5h3M571 124.5h3M577 124.5h3M583 124.5h3M589 124.5h3M595 124.5h3M601 124.5h3M607 124.5h3M613 124.5h3M619 124.5h3M625 124.5h3M631 124.5h3M637 124.5h3M643 124.5h3M649 124.5h3M655 124.5h3M661 124.5h3M667 124.5h3M673 124.5h3M679 124.5h3M685 124.5h1" stroke="#778899" stroke-width="1" fill="none"/>
<path d="M13 157.5h3M19 157.5h3M25 157.5h3M31 157.5h3M37 157.5h3M43 157.5h3M49 157.5h3M55 157.5h3M61 157.5h3M67 157.5h3M73 157.5h3M79 157.5h3M85 157.5h3M91 157.5h3M97 157.5h3M103 157.5h3M109 157.5h3M115 157.5h3M121 157.5h3M127 157.5h3M133 157.5h3M139 157.5h3M145 157.5h3M151 157.5h3M157 157.5h3M163 157.5h3M169 157.5h3M175 157.5h3M181 157.5h3M187 157.5h3M193 157.5h3M199 157.5h3M205 157.5h3M211 157.5h3M217 157.5h3M223 157.5h3M229 157.5h3M235 157.5h3M241 157.5h3M247 157.5h3M253 157.5h3M259 157.5h3M265 157.5h3M271 157.5h3M277 157.5h3M283 157.5h3M289 157.5h3M295 157.5h3M301 157.5h3M307 157.5h3M313 157.5h3M319 157.5h3M325 157.5h3M331 157.5h3M337 157.5h3M343 157.5h3M349 157.5h3M355 157.5h3M361 157.5h3M367 157.5h3M373 157.5h3M379 157.5h3M385 157.5h3M391 157.5h3M397 157.5h3M403 157.5h3M409 157.5h3M415 157.5h3M421 157.5h3M427 157.5h3M433 157.5h3M439 157.5h3M445 157.5h3M451 157.5h3M457 157.5h3M463 157.5h3M469 157.5h3M475 157.5h3M481 157.5h3M487 157.5h3M493 157.5h3M499 157.5h3M505 157.5h3M511 157.5h3M517 157.5h3M523 157.5h3M529 157.5h3M535 157.5h3M541 157.5h3M547 157.5h3M553 157.5h3M559 157.5h3M565 157.5h3M571 157.5h3M577 157.5h3M583 157.5h3M589 157.5h3M595 157.5h3M601 157.5h3M607 157.5h3M613 157.5h3M619 157.5h3M625 157.5h3M631 157.5h3M637 157.5h3M643 157.5h3M649 157.5h3M655 157.5h3M661 157.5h3M667 157.5h3M673 157.5h3M679 157.5h3M685 157.5h1" stroke="#778899" stroke-width="1" fill="none"/>
<path d="M13 190.5h3M19 190.5h3M25 190.5h3M31 190.5h3M37 190.5h3M43 190.5h3M49 190.5h3M55 190.5h3M61 190.5h3M67 190.5h3M73 190.5h3M79 190.5h3M85 190.5h3M91 190.5h3M97 190.5h3M103 190.5h3M109 190.5h3M115 190.5h3M121 190.5h3M127 190.5h3M133 190.5h3M139 190.5h3M145 190.5h3M151 190.5h3M157 190.5h3M163 190.5h3M169 190.5h3M175 190.5h3M181 190.5h3M187 190.5h3M193 190.5h3M199 190.5h3M205 190.5h3M211 190.5h3M217 190.5h3M223 190.5h3M229 190.5h3M235 190.5h3M241 190.5h3M247 190.5h3M253 190.5h3M259 190.5h3M265 190.5h3M271 190.5h3M277 190.5h3M283 190.5h3M289 190.5h3M295 190.5h3M301 190.5h3M307 190.5h3M313 190.5h3M319 190.5h3M325 190.5h3M331 190.5h3M337 190.5h3M343 190.5h3M349 190.5h3M355 190.5h3M361 190.5h3M367 190.5h3M373 190.5h3M379 190.5h3M385 190.5h3M391 190.5h3M397 190.5h3M403 190.5h3M409 190.5h3M415 190.5h3M421 190.5h3M427 190.5h3M433 190.5h3M439 190.5h3M445 190.5h3M451 190.5h3M457 190.5h3M463 190.5h3M469 190.5h3M475 190.5h3M481 190.5h3M487 190.5h3M493 190.5h3M499 190.5h3M505 190.5h3M511 190.5h3M517 190.5h3M523 190.5h3M529 190.5h3M535 190.5h3M541 190.5h3M547 190.5h3M553 190.5h3M559 190.5h3M565 190.5h3M571 190.5h3M577 190.5h3M583 190.5h3M589 190.5h3M595 190.5h3M601 190.5h3M607 190.5h3M613 190.5h3M619 190.5h3M625 190.5h3M631 190.5h3M637 190.5h3M643 190.5h3M649 190.5h3M655 190.5h3M661 190.5h3M667 190.5h3M673 190.5h3M679 190.5h3M685 190.5h1" stroke="#778899" stroke-width="1" fill="none"/>
<path d="M13 223.5h3M19 223.5h3M25 223.5h3M31 223.5h3M37 223.5h3M43 223.5h3M49 223.5h3M55 223.5h3M61 223.5h3M67 223.5h3M73 223.5h3M79 223.5h3M85 223.5h3M91 223.5h3M97 223.5h3M103 223.5h3M109 223.5h3M115 223.5h3M121 223.5h3M127 223.5h3M133 223.5h3M139 223.5h3M145 223.5h3M151 223.5h3M157 223.5h3M163 223.5h3M169 223.5h3M175 223.5h3M181 223.5h3M187 223.5h3M193 223.5h3M199 223.5h3M205 223.5h3M211 223.5h3M217 223.5h3M223 223.5h3M229 223.5h3M235 223.5h3M241 223.5h3M247 223.5h3M253 223.5h3M259 223.5h3M265 223.5h3M271 223.5h3M277 223.5h3M283 223.5h3M289 223.5h3M295 223.5h3M301 223.5h3M307 223.5h3M313 223.5h3M319 223.5h3M325 223.5h3M331 223.5h3M337 223.5h3M343 223.5h3M349 223.5h3M355 223.5h3M361 223.5h3M367 223.5h3M373 223.5h3M379 223.5h3M385 223.5h3M391 223.5h3M397 223.5h3M403 223.5h3M409 223.5h3M415 223.5h3M421 223.5h3M427 223.5h3M433 223.5h3M439 223.5h3M445 223.5h3M451 223.5h3M457 223.5h3M463 223.5h3M469 223.5h3M475 223.5h3M481 223.5h3M487 223.5h3M493 223.5h3M499 223.5h3M505 223.5h3M511 223.5h3M517 223.5h3M523 223.5h3M529 223.5h3M535 223.5h3M541 223.5h3M547 223.5h3M553 223.5h3M559 223.5h3M565 223.5h3M571 223.5h3M577 223.5h3M583 223.5h3M589 223.5h3M595 223.5h3M601 223.5h3M607 223.5h3M613 223.5h3M619 223.5h3M625 223.5h3M631 223.5h3M637 223.5h3M643 223.5h3M649 223.5h3M655 223.5h3M661 223.5h3M667 223.5h3M673 223.5h3M679 223.5h3M685 223.5h1" stroke="#778899" stroke-width="1" fill="none"/>
<path d="M13 256.5h3M19 256.5h3M25 256.5h3M31 256.5h3M37 256.5h3M43 256.5h3M49 256.5h3M55 256.5h3M61 256.5h3M67 256.5h3M73 256.5h3M79 256.5h3M85 256.5h3M91 256.5h3M97 256.5h3M103 256.5h3M109 256.5h3M115 256.5h3M121 256.5h3M127 256.5h3M133 256.5h3M139 256.5h3M145 256.5h3M151 256.5h3M157 256.5h3M163 256.5h3M169 256.5h3M175 256.5h3M181 256.5h3M187 256.5h3M193 256.5h3M199 256.5h3M205 256.5h3M211 256.5h3M217 256.5h3M223 256.5h3M229 256.5h3M235 256.5h3M241 256.5h3M247 256.5h3M253 256.5h3M259 256.5h3M265 256.5h3M271 256.5h3M277 256.5h3M283 256.5h3M289 256.5h3M295 256.5h3M301 256.5h3M307 256.5h3M313 256.5h3M319 256.5h3M325 256.5h3M331 256.5h3M337 256.5h3M343 256.5h3M349 256.5h3M355 256.5h3M361 256.5h3M367 256.5h3M373 256.5h3M379 256.5h3M385 256.5h3M391 256.5h3M397 256.5h3M403 256.5h3M409 256.5h3M415 256.5h3M421 256.5h3M427 256.5h3M433 256.5h3M439 256.5h3M445 256.5h3M451 256.5h3M457 256.5h3M463 256.5h3M469 256.5h3M475 256.5h3M481 256.5h3M487 256.5h3M493 256.5h3M499 256.5h3M505 256.5h3M511 256.5h3M517 256.5h3M523 256.5h3M529 256.5h3M535 256.5h3M541 256.5h3M547 256.5h3M553 256.5h3M559 256.5h3M565 256.5h3M571 256.5h3M577 256.5h3M583 256.5h3M589 256.5h3M595 256.5h3M601 256.5h3M607 256.5h3M613 256.5h3M619 256.5h3M625 256.5h3M631 256.5h3M637 256.5h3M643 256.5h3M649 256.5h3M655 256.5h3M661 256.5h3M667 256.5h3M673 256.5h3M679 256.5h3M685 256.5h1" stroke="#778899" stroke-width="1" fill="none"/>
<path d="M13 289.5h3M19 289.5h3M25 289.5h3M31 289.5h3M37 289.5h3M43 289.5h3M49 289.5h3M55 289.5h3M61 289.5h3M67 289.5h3M73 289.5h3M79 289.5h3M85 289.5h3M91 289.5h3M97 289.5h3M103 289.5h3M109 289.5h3M115 289.5h3M121 289.5h3M127 289.5h3M133 289.5h3M139 289.5h3M145 289.5h3M151 289.5h3M157 289.5h3M163 289.5h3M169 289.5h3M175 289.5h3M181 289.5h3M187 289.5h3M193 289.5h3M199 289.5h3M205 289.5h3M211 289.5h3M217 289.5h3M223 289.5h3M229 289.5h3M235 289.5h3M241 289.5h3M247 289.5h3M253 289.5h3M259 289.5h3M265 289.5h3M271 289.5h3M277 289.5h3M283 289.5h3M289 289.5h3M295 289.5h3M301 289.5h3M307 289.5h3M313 289.5h3M319 289.5h3M325 289.5h3M331 289.5h3M337 289.5h3M343 289.5h3M349 289.5h3M355 289.5h3M361 289.5h3M367 289.5h3M373 289.5h3M379 289.5h3M385 289.5h3M391 289.5h3M397 289.5h3M403 289.5h3M409 289.5h3M415 289.5h3M421 289.5h3M427 289.5h3M433 289.5h3M439 289.5h3M445 289.5h3M451 289.5h3M457 289.5h3M463 289.5h3M469 289.5h3M475 289.5h3M481 289.5h3M487 289.5h3M493 289.5h3M499 289.5h3M505 289.5h3M511 289.5h3M517 289.5h3M523 289.5h3M529 289.5h3M535 289.5h3M541 289.5h3M547 289.5h3M553 289.5h3M559 289.5h3M565 289.5h3M571 289.5h3M577 289.5h3M583 289.5h3M589 289.5h3M595 289.5h3M601 289.5h3M607 289.5h3M613 289.5h3M619 289.5h3M625 289.5h3M631 289.5h3M637 289.5h3M643 289.5h3M649 289.5h3M655 289.5h3M661 289.5h3M667 289.5h3M673 289.5h3M679 289.5h3M685 289.5h1" stroke="#778899" stroke-width="1" fill="none"/>
<path d="M13 307.5h3M19 307.5h3M25 307.5h3M31 307.5h3M37 307.5h3M43 307.5h3M49 307.5h3M55 307.5h3M61 307.5h3M67 307.5h3M73 307.5h3M79 307.5h3M85 307.5h3M91 307.5h3M97 307.5h3M103 307.5h3M109 307.5h3M115 307.5h3M121 307.5h3M127 307.5h3M133 307.5h3M139 307.5h3M145 307.5h3M151 307.5h3M157 307.5h3M163 307.5h3M169 307.5h3M175 307.5h3M181 307.5h3M187 307.5h3M193 307.5h3M199 307.5h3M205 307.5h3M211 307.5h3M217 307.5h3M223 307.5h3M229 307.5h3M235 307.5h3M241 307.5h3M247 307.5h3M253 307.5h3M259 307.5h3M265 307.5h3M271 307.5h3M277 307.5h3M283 307.5h3M289 307.5h3M295 307.5h3M301 307.5h3M307 307.5h3M313 307.5h3M319 307.5h3M325 307.5h3M331 307.5h3M337 307.5h3M343 307.5h3M349 307.5h3M355 307.5h3M361 307.5h3M367 307.5h3M373 307.5h3M379 307.5h3M385 307.5h3M391 307.5h3M397 307.5h3M403 307.5h3M409 307.5h3M415 307.5h3M421 307.5h3M427 307.5h3M433 307.5h3M439 307.5h3M445 307.5h3M451 307.5h3M457 307.5h3M463 307.5h3M469 307.5h3M475 307.5h3M481 307.5h3M487 307.5h3M493 307.5h3M499 307.5h3M505 307.5h3M511 307.5h3M517 307.5h3M523 307.5h3M529 307.5h3M535 307.5h3M541 307.5h3M547 307.5h3M553 307.5h3M559 307.5h3M565 307.5h3M571 307.5h3M577 307.5h3M583 307.5h3M589 307.5h3M595 307.5h3M601 307.5h3M607 307.5h3M613 307.5h3M619 307.5h3M625 307.5h3M631 307.5h3M637 307.5h3M643 307.5h3M649 307.5h3M655 307.5h3M661 307.5h3M667 307.5h3M673 307.5h3M679 307.5h3M685 307.5h1" stroke="#c0c0c0" stroke-width="1" fill="none"/>
<path d="M13 318.5h3M19 318.5h3M25 318.5h3M31 318.5h3M37 318.5h3M43 318.5h3M49 318.5h3M55 318.5h3M61 318.5h3M67 318.5h3M73 318.5h3M79 318.5h3M85 318.5h3M91 318.5h3M97 318.5h3M103 318.5h3M109 318.5h3M115 318.5h3M121 318.5h3M127 318.5h3M133 318.5h3M139 318.5h3M145 318.5h3M151 318.5h3M157 318.5h3M163 318.5h3M169 318.5h3M175 318.5h3M181 318.5h3M187 318.5h3M193 318.5h3M199 318.5h3M205 318.5h3M211 318.5h3M217 318.5h3M223 318.5h3M229 318.5h3M235 318.5h3M241 318.5h3M247 318.5h3M253 318.5h3M259 318.5h3M265 318.5h3M271 318.5h3M277 318.5h3M283 318.5h3M289 318.5h3M295 318.5h3M301 318.5h3M307 318.5h3M313 318.5h3M319 318.5h3M325 318.5h3M331 318.5h3M337 318.5h3M343 318.5h3M349 318.5h3M355 318.5h3M361 318.5h3M367 318.5h3M373 318.5h3M379 318.5h3M385 318.5h3M391 318.5h3M397 318.5h3M403 318.5h3M409 318.5h3M415 318.5h3M421 318.5h3M427 318.5h3M433 318.5h3M439 318.5h3M445 318.5h3M451 318.5h3M457 318.5h3M463 318.5h3M469 318.5h3M475 318.5h3M481 318.5h3M487 318.5h3M493 318.5h3M499 318.5h3M505 318.5h3M511 318.5h3M517 318.5h3M523 318.5h3M529 318.5h3M535 318.5h3M541 318.5h3M547 318.5h3M553 318.5h3M559 318.5h3M565 318.5h3M571 318.5h3M577 318.5h3M583 318.5h3M589 318.5h3M595 318.5h3M601 318.5h3M607 318.5h3M613 318.5h3M619 318.5h3M625 318.5h3M631 318.5h3M637 318.5h3M643 318.5h3M649 318.5h3M655 318.5h3M661 318.5h3M667 318.5h3M673 318.5h3M679 318.5h3M685 318.5h1" stroke="#c0c0c0" stroke-width="1" fill="none"/>
<path d="M13 336.5h3M19 336.5h3M25 336.5h3M31 336.5h3M37 336.5h3M43 336.5h3M49 336.5h3M55 336.5h3M61 336.5h3M67 336.5h3M73 336.5h3M79 336.5h3M85 336.5h3M91 336.5h3M97 336.5h3M103 336.5h3M109 336.5h3M115 336.5h3M121 336.5h3M127 336.5h3M133 336.5h3M139 336.5h3M145 336.5h3M151 336.5h3M157 336.5h3M163 336.5h3M169 336.5h3M175 336.5h3M181 336.5h3M187 336.5h3M193 336.5h3M199 336.5h3M205 336.5h3M211 336.5h3M217 336.5h3M223 336.5h3M229 336.5h3M235 336.5h3M241 336.5h3M247 336.5h3M253 336.5h3M259 336.5h3M265 336.5h3M271 336.5h3M277 336.5h3M283 336.5h3M289 336.5h3M295 336.5h3M301 336.5h3M307 336.5h3M313 336.5h3M319 336.5h3M325 336.5h3M331 336.5h3M337 336.5h3M343 336.5h3M349 336.5h3M355 336.5h3M361 336.5h3M367 336.5h3M373 336.5h3M379 336.5h3M385 336.5h3M391 336.5h3M397 336.5h3M403 336.5h3M409 336.5h3M415 336.5h3M421 336.5h3M427 336.5h3M433 336.5h3M439 336.5h3M445 336.5h3M451 336.5h3M457 336.5h3M463 336.5h3M469 336.5h3M475 336.5h3M481 336.5h3M487 336.5h3M493 336.5h3M499 336.5h3M505 336.5h3M511 336.5h3M517 336.5h3M523 336.5h3M529 336.5h3M535 336.5h3M541 336.5h3M547 336.5h3M553 336.5h3M559 336.5h3M565 336.5h3M571 336.5h3M577 336.5h3M583 336.5h3M589 336.5h3M595 336.5h3M601 336.5h3M607 336.5h3M613 336.5h3M619 336.5h3M625 336.5h3M631 336.5h3M637 336.5h3M643 336.5h3M649 336.5h3M655 336.5h3M661 336.5h3M667 336.5h3M673 336.5h3M679 336.5h3M685 336.5h1" stroke="#c0c0c0" stroke-width="1" fill="none"/>
<path d="M13 364.5h3M19 364.5h3M25 364.5h3M31 364.5h3M37 364.5h3M43 364.5h3M49 364.5h3M55 364.5h3M61 364.5h3M67 364.5h3M73 364.5h3M79 364.5h3M85 364.5h3M91 364.5h3M97 364.5h3M103 364.5h3M109 364.5h3M115 364.5h3M121 364.5h3M127 364.5h3M133 364.5h3M139 364.5h3M145 364.5h3M151 364.5h3M157 364.5h3M163 364.5h3M169 364.5h3M175 364.5h3M181 364.5h3M187 364.5h3M193 364.5h3M199 364.5h3M205 364.5h3M211 364.5h3M217 364.5h3M223 364.5h3M229 364.5h3M235 364.5h3M241 364.5h3M247 364.5h3M253 364.5h3M259 364.5h3M265 364.5h3M271 364.5h3M277 364.5h3M283 364.5h3M289 364.5h3M295 364.5h3M301 364.5h3M307 364.5h3M313 364.5h3M319 364.5h3M325 364.5h3M331 364.5h3M337 364.5h3M343 364.5h3M349 364.5h3M355 364.5h3M361 364.5h3M367 364.5h3M373 364.5h3M379 364.5h3M385 364.5h3M391 364.5h3M397 364.5h3M403 364.5h3M409 364.5h3M415 364.5h3M421 364.5h3M427 364.5h3M433 364.5h3M439 364.5h3M445 364.5h3M451 364.5h3M457 364.5h3M463 364.5h3M469 364.5h3M475 364.5h3M481 364.5h3M487 364.5h3M493 364.5h3M499 364.5h3M505 364.5h3M511 364.5h3M517 364.5h3M523 364.5h3M529 364.5h3M535 364.5h3M541 364.5h3M547 364.5h3M553 364.5h3M559 364.5h3M565 364.5h3M571 364.5h3M577 364.5h3M583 364.5h3M589 364.5h3M595 364.5h3M601 364.5h3M607 364.5h3M613 364.5h3M619 364.5h3M625 364.5h3M631 364.5h3M637 364.5h3M643 364.5h3M649 364.5h3M655 364.5h3M661 364.5h3M667 364.5h3M673 364.5h3M679 364.5h3M685 364.5h1" stroke="#c0c0c0" stroke-width="1" fill="none"/>
<path d="M13 393.5h3M19 393.5h3M25 393.5h3M31 393.5h3M37 393.5h3M43 393.5h3M49 393.5h3M55 393.5h3M61 393.5h3M67 393.5h3M73 393.5h3M79 393.5h3M85 393.5h3M91 393.5h3M97 393.5h3M103 393.5h3M109 393.5h3M115 393.5h3M121 393.5h3M127 393.5h3M133 393.5h3M139 393.5h3M145 393.5h3M151 393.5h3M157 393.5h3M163 393.5h3M169 393.5h3M175 393.5h3M181 393.5h3M187 393.5h3M193 393.5h3M199 393.5h3M205 393.5h3M211 393.5h3M217 393.5h3M223 393.5h3M229 393.5h3M235 393.5h3M241 393.5h3M247 393.5h3M253 393.5h3M259 393.5h3M265 393.5h3M271 393.5h3M277 393.5h3M283 393.5h3M289 393.5h3M295 393.5h3M301 393.5h3M307 393.5h3M313 393.5h3M319 393.5h3M325 393.5h3M331 393.5h3M337 393.5h3M343 393.5h3M349 393.5h3M355 393.5h3M361 393.5h3M367 393.5h3M373 393.5h3M379 393.5h3M385 393.5h3M391 393.5h3M397 393.5h3M403 393.5h3M409 393.5h3M415 393.5h3M421 393.5h3M427 393.5h3M433 393.5h3M439 393.5h3M445 393.5h3M451 393.5h3M457 393.5h3M463 393.5h3M469 393.5h3M475 393.5h3M481 393.5h3M487 393.5h3M493 393.5h3M499 393.5h3M505 393.5h3M511 393.5h3M517 393.5h3M523 393.5h3M529 393.5h3M535 393.5h3M541 393.5h3M547 393.5h3M553 393.5h3M559 393.5h3M565 393.5h3M571 393.5h3M577 393.5h3M583 393.5h3M589 393.5h3M595 393.5h3M601 393.5h3M607 393.5h3M613 393.5h3M619 393.5h3M625 393.5h3M631 393.5h3M637 393.5h3M643 393.5h3M649 393.5h3M655 393.5h3M661 393.5h3M667 393.5h3M673 393.5h3M679 393.5h3M685 393.5h1" stroke="#c0c0c0" stroke-width="1" fill="none"/>
<path d="M13 410.5h3M19 410.5h3M25 410.5h3M31 410.5h3M37 410.5h3M43 410.5h3M49 410.5h3M55 410.5h3M61 410.5h3M67 410.5h3M73 410.5h3M79 410.5h3M85 410.5h3M91 410.5h3M97 410.5h3M103 410.5h3M109 410.5h3M115 410.5h3M121 410.5h3M127 410.5h3M133 410.5h3M139 410.5h3M145 410.5h3M151 410.5h3M157 410.5h3M163 410.5h3M169 410.5h3M175 410.5h3M181 410.5h3M187 410.5h3M193 410.5h3M199 410.5h3M205 410.5h3M211 410.5h3M217 410.5h3M223 410.5h3M229 410.5h3M235 410.5h3M241 410.5h3M247 410.5h3M253 410.5h3M259 410.5h3M265 410.5h3M271 410.5h3M277 410.5h3M283 410.5h3M289 410.5h3M295 410.5h3M301 410.5h3M307 410.5h3M313 410.5h3M319 410.5h3M325 410.5h3M331 410.5h3M337 410.5h3M343 410.5h3M349 410.5h3M355 410.5h3M361 410.5h3M367 410.5h3M373 410.5h3M379 410.5h3M385 410.5h3M391 410.5h3M397 410.5h3M403 410.5h3M409 410.5h3M415 410.5h3M421 410.5h3M427 410.5h3M433 410.5h3M439 410.5h3M445 410.5h3M451 410.5h3M457 410.5h3M463 410.5h3M469 410.5h3M475 410.5h3M481 410.5h3M487 410.5h3M493 410.5h3M499 410.5h3M505 410.5h3M511 410.5h3M517 410.5h3M523 410.5h3M529 410.5h3M535 410.5h3M541 410.5h3M547 410.5h3M553 410.5h3M559 410.5h3M565 410.5h3M571 410.5h3M577 410.5h3M583 410.5h3M589 410.5h3M595 410.5h3M601 410.5h3M607 410.5h3M613 410.5h3M619 410.5h3M625 410.5h3M631 410.5h3M637 410.5h3M643 410.5h3M649 410.5h3M655 410.5h3M661 410.5h3M667 410.5h3M673 410.5h3M679 410.5h3M685 410.5h1" stroke="#c0c0c0" stroke-width="1" fill="none"/>
<path d="M13 425.5h3M19 425.5h3M25 425.5h3M31 425.5h3M37 425.5h3M43 425.5h3M49 425.5h3M55 425.5h3M61 425.5h3M67 425.5h3M73 425.5h3M79 425.5h3M85 425.5h3M91 425.5h3M97 425.5h3M103 425.5h3M109 425.5h3M115 425.5h3M121 425.5h3M127 425.5h3M133 425.5h3M139 425.5h3M145 425.5h3M151 425.5h3M157 425.5h3M163 425.5h3M169 425.5h3M175 425.5h3M181 425.5h3M187 425.5h3M193 425.5h3M199 425.5h3M205 425.5h3M211 425.5h3M217 425.5h3M223 425.5h3M229 425.5h3M235 425.5h3M241 425.5h3M247 425.5h3M253 425.5h3M259 425.5h3M265 425.5h3M271 425.5h3M277 425.5h3M283 425.5h3M289 425.5h3M295 425.5h3M301 425.5h3M307 425.5h3M313 425.5h3M319 425.5h3M325 425.5h3M331 425.5h3M337 425.5h3M343 425.5h3M349 425.5h3M355 425.5h3M361 425.5h3M367 425.5h3M373 425.5h3M379 425.5h3M385 425.5h3M391 425.5h3M397 425.5h3M403 425.5h3M409 425.5h3M415 425.5h3M421 425.5h3M427 425.5h3M433 425.5h3M439 425.5h3M445 425.5h3M451 425.5h3M457 425.5h3M463 425.5h3M469 425.5h3M475 425.5h3M481 425.5h3M487 425.5h3M493 425.5h3M499 425.5h3M505 425.5h3M511 425.5h3M517 425.5h3M523 425.5h3M529 425.5h3M535 425.5h3M541 425.5h3M547 425.5h3M553 425.5h3M559 425.5h3M565 425.5h3M571 425.5h3M577 425.5h3M583 425.5h3M589 425.5h3M595 425.5h3M601 425.5h3M607 425.5h3M613 425.5h3M619 425.5h3M625 425.5h3M631 425.5h3M637 425.5h3M643 425.5h3M649 425.5h3M655 425.5h3M661 425.5h3M667 425.5h3M673 425.5h3M679 425.5h3M685 425.5h1" stroke="#778899" stroke-width="1" fill="none"/>
<path d="M13 451.5h3M19 451.5h3M25 451.5h3M31 451.5h3M37 451.5h3M43 451.5h3M49 451.5h3M55 451.5h3M61 451.5h3M67 451.5h3M73 451.5h3M79 451.5h3M85 451.5h3M91 451.5h3M97 451.5h3M103 451.5h3M109 451.5h3M115 451.5h3M121 451.5h3M127 451.5h3M133 451.5h3M139 451.5h3M145 451.5h3M151 451.5h3M157 451.5h3M163 451.5h3M169 451.5h3M175 451.5h3M181 451.5h3M187 451.5h3M193 451.5h3M199 451.5h3M205 451.5h3M211 451.5h3M217 451.5h3M223 451.5h3M229 451.5h3M235 451.5h3M241 451.5h3M247 451.5h3M253 451.5h3M259 451.5h3M265 451.5h3M271 451.5h3M277 451.5h3M283 451.5h3M289 451.5h3M295 451.5h3M301 451.5h3M307 451.5h3M313 451.5h3M319 451.5h3M325 451.5h3M331 451.5h3M337 451.5h3M343 451.5h3M349 451.5h3M355 451.5h3M361 451.5h3M367 451.5h3M373 451.5h3M379 451.5h3M385 451.5h3M391 451.5h3M397 451.5h3M403 451.5h3M409 451.5h3M415 451.5h3M421 451.5h3M427 451.5h3M433 451.5h3M439 451.5h3M445 451.5h3M451 451.5h3M457 451.5h3M463 451.5h3M469 451.5h3M475 451.5h3M481 451.5h3M487 451.5h3M493 451.5h3M499 451.5h3M505 451.5h3M511 451.5h3M517 451.5h3M523 451.5h3M529 451.5h3M535 451.5h3M541 451.5h3M547 451.5h3M553 451.5h3M559 451.5h3M565 451.5h3M571 451.5h3M577 451.5h3M583 451.5h3M589 451.5h3M595 451.5h3M601 451.5h3M607 451.5h3M613 451.5h3M619 451.5h3M625 451.5h3M631 451.5h3M637 451.5h3M643 451.5h3M649 451.5h3M655 451.5h3M661 451.5h3M667 451.5h3M673 451.5h3M679 451.5h3M685 451.5h1" stroke="#c0c0c0" stroke-width="1" fill="none"/>
<path d="M13 476.5h3M19 476.5h3M25 476.5h3M31 476.5h3M37 476.5h3M43 476.5h3M49 476.5h3M55 476.5h3M61 476.5h3M67 476.5h3M73 476.5h3M79 476.5h3M85 476.5h3M91 476.5h3M97 476.5h3M103 476.5h3M109 476.5h3M115 476.5h3M121 476.5h3M127 476.5h3M133 476.5h3M139 476.5h3M145 476.5h3M151 476.5h3M157 476.5h3M163 476.5h3M169 476.5h3M175 476.5h3M181 476.5h3M187 476.5h3M193 476.5h3M199 476.5h3M205 476.5h3M211 476.5h3M217 476.5h3M223 476.5h3M229 476.5h3M235 476.5h3M241 476.5h3M247 476.5h3M253 476.5h3M259 476.5h3M265 476.5h3M271 476.5h3M277 476.5h3M283 476.5h3M289 476.5h3M295 476.5h3M301 476.5h3M307 476.5h3M313 476.5h3M319 476.5h3M325 476.5h3M331 476.5h3M337 476.5h3M343 476.5h3M349 476.5h3M355 476.5h3M361 476.5h3M367 476.5h3M373 476.5h3M379 476.5h3M385 476.5h3M391 476.5h3M397 476.5h3M403 476.5h3M409 476.5h3M415 476.5h3M421 476.5h3M427 476.5h3M433 476.5h3M439 476.5h3M445 476.5h3M451 476.5h3M457 476.5h3M463 476.5h3M469 476.5h3M475 476.5h3M481 476.5h3M487 476.5h3M493 476.5h3M499 476.5h3M505 476.5h3M511 476.5h3M517 476.5h3M523 476.5h3M529 476.5h3M535 476.5h3M541 476.5h3M547 476.5h3M553 476.5h3M559 476.5h3M565 476.5h3M571 476.5h3M577 476.5h3M583 476.5h3M589 476.5h3M595 476.5h3M601 476.5h3M607 476.5h3M613 476.5h3M619 476.5h3M625 476.5h3M631 476.5h3M637 476.5h3M643 476.5h3M649 476.5h3M655 476.5h3M661 476.5h3M667 476.5h3M673 476.5h3M679 476.5h3M685 476.5h1" stroke="#c0c0c0" stroke-width="1" fill="none"/>
<path d="M13 501.5h3M19 501.5h3M25 501.5h3M31 501.5h3M37 501.5h3M43 501.5h3M49 501.5h3M55 501.5h3M61 501.5h3M67 501.5h3M73 501.5h3M79 501.5h3M85 501.5h3M91 501.5h3M97 501.5h3M103 501.5h3M109 501.5h3M115 501.5h3M121 501.5h3M127 501.5h3M133 501.5h3M139 501.5h3M145 501.5h3M151 501.5h3M157 501.5h3M163 501.5h3M169 501.5h3M175 501.5h3M181 501.5h3M187 501.5h3M193 501.5h3M199 501.5h3M205 501.5h3M211 501.5h3M217 501.5h3M223 501.5h3M229 501.5h3M235 501.5h3M241 501.5h3M247 501.5h3M253 501.5h3M259 501.5h3M265 501.5h3M271 501.5h3M277 501.5h3M283 501.5h3M289 501.5h3M295 501.5h3M301 501.5h3M307 501.5h3M313 501.5h3M319 501.5h3M325 501.5h3M331 501.5h3M337 501.5h3M343 501.5h3M349 501.5h3M355 501.5h3M361 501.5h3M367 501.5h3M373 501.5h3M379 501.5h3M385 501.5h3M391 501.5h3M397 501.5h3M403 501.5h3M409 501.5h3M415 501.5h3M421 501.5h3M427 501.5h3M433 501.5h3M439 501.5h3M445 501.5h3M451 501.5h3M457 501.5h3M463 501.5h3M469 501.5h3M475 501.5h3M481 501.5h3M487 501.5h3M493 501.5h3M499 501.5h3M505 501.5h3M511 501.5h3M517 501.5h3M523 501.5h3M529 501.5h3M535 501.5h3M541 501.5h3M547 501.5h3M553 501.5h3M559 501.5h3M565 501.5h3M571 501.5h3M577 501.5h3M583 501.5h3M589 501.5h3M595 501.5h3M601 501.5h3M607 501.5h3M613 501.5h3M619 501.5h3M625 501.5h3M631 501.5h3M637 501.5h3M643 501.5h3M649 501.5h3M655 501.5h3M661 501.5h3M667 501.5h3M673 501.5h3M679 501.5h3M685 501.5h1" stroke="#c0c0c0" stroke-width="1" fill="none"/>
<path d="M13 526.5h3M19 526.5h3M25 526.5h3M31 526.5h3M37 526.5h3M43 526.5h3M49 526.5h3M55 526.5h3M61 526.5h3M67 526.5h3M73 526.5h3M79 526.5h3M85 526.5h3M91 526.5h3M97 526.5h3M103 526.5h3M109 526.5h3M115 526.5h3M121 526.5h3M127 526.5h3M133 526.5h3M139 526.5h3M145 526.5h3M151 526.5h3M157 526.5h3M163 526.5h3M169 526.5h3M175 526.5h3M181 526.5h3M187 526.5h3M193 526.5h3M199 526.5h3M205 526.5h3M211 526.5h3M217 526.5h3M223 526.5h3M229 526.5h3M235 526.5h3M241 526.5h3M247 526.5h3M253 526.5h3M259 526.5h3M265 526.5h3M271 526.5h3M277 526.5h3M283 526.5h3M289 526.5h3M295 526.5h3M301 526.5h3M307 526.5h3M313 526.5h3M319 526.5h3M325 526.5h3M331 526.5h3M337 526.5h3M343 526.5h3M349 526.5h3M355 526.5h3M361 526.5h3M367 526.5h3M373 526.5h3M379 526.5h3M385 526.5h3M391 526.5h3M397 526.5h3M403 526.5h3M409 526.5h3M415 526.5h3M421 526.5h3M427 526.5h3M433 526.5h3M439 526.5h3M445 526.5h3M451 526.5h3M457 526.5h3M463 526.5h3M469 526.5h3M475 526.5h3M481 526.5h3M487 526.5h3M493 526.5h3M499 526.5h3M505 526.5h3M511 526.5h3M517 526.5h3M523 526.5h3M529 526.5h3M535 526.5h3M541 526.5h3M547 526.5h3M553 526.5h3M559 526.5h3M565 526.5h3M571 526.5h3M577 526.5h3M583 526.5h3M589 526.5h3M595 526.5h3M601 526.5h3M607 526.5h3M613 526.5h3M619 526.5h3M625 526.5h3M631 526.5h3M637 526.5h3M643 526.5h3M649 526.5h3M655 526.5h3M661 526.5h3M667 526.5h3M673 526.5h3M679 526.5h3M685 526.5h1" stroke="#c0c0c0" stroke-width="1" fill="none"/>
<rect x="687" y="58" width="2" height="1" fill="#ffffff"/>
<rect x="687" y="91" width="2" height="1" fill="#ffffff"/>
<rect x="687" y="124" width="2" height="1" fill="#ffffff"/>
<rect x="687" y="157" width="2" height="1" fill="#ffffff"/>
<rect x="687" y="190" width="2" height="1" fill="#ffffff"/>
<rect x="687" y="223" width="2" height="1" fill="#ffffff"/>
<rect x="687" y="256" width="2" height="1" fill="#ffffff"/>
<rect x="687" y="289" width="2" height="1" fill="#ffffff"/>
<rect x="687" y="296" width="2" height="1" fill="#ffffff"/>
<rect x="687" y="364" width="2" height="1" fill="#ffffff"/>
<rect x="687" y="421" width="2" height="1" fill="#ffffff"/>
<rect x="687" y="426" width="2" height="1" fill="#ffffff"/>
<rect x="687" y="551" width="2" height="1" fill="#ffffff"/>
<rect x="12" y="553" width="1" height="3" fill="#ffffff"/>
<rect x="76" y="553" width="1" height="3" fill="#ffffff"/>
<rect x="140" y="553" width="1" height="3" fill="#ffffff"/>
<rect x="204" y="553" width="1" height="3" fill="#ffffff"/>
<rect x="268" y="553" width="1" height="3" fill="#ffffff"/>
<rect x="332" y="553" width="1" height="3" fill="#ffffff"/>
<rect x="396" y="553" width="1" height="3" fill="#ffffff"/>
<rect x="460" y="553" width="1" height="3" fill="#ffffff"/>
<rect x="524" y="553" width="1" height="3" fill="#ffffff"/>
<rect x="588" y="553" width="1" height="3" fill="#ffffff"/>
<rect x="652" y="553" width="1" height="3" fill="#ffffff"/>
</g>
<g shape-rendering="crispEdges" clip-path="url(#cm)">
<rect x="12" y="153" width="1" height="29" fill="#00ff00"/>
<rect x="10" y="158" width="5" height="20" fill="#00ff00"/>
<rect x="11" y="159" width="3" height="18" fill="#000000"/>
<rect x="20" y="132" width="1" height="35" fill="#00ff00"/>
<rect x="18" y="146" width="5" height="13" fill="#00ff00"/>
<rect x="19" y="147" width="3" height="11" fill="#000000"/>
<rect x="28" y="138" width="1" height="27" fill="#00ff00"/>
<rect x="26" y="146" width="5" height="18" fill="#00ff00"/>
<rect x="27" y="147" width="3" height="16" fill="#ffffff"/>
<rect x="36" y="159" width="1" height="29" fill="#00ff00"/>
<rect x="34" y="163" width="5" height="16" fill="#00ff00"/>
<rect x="35" y="164" width="3" height="14" fill="#ffffff"/>
<rect x="44" y="168" width="1" height="16" fill="#00ff00"/>
<rect x="42" y="170" width="5" height="9" fill="#00ff00"/>
<rect x="43" y="171" width="3" height="7" fill="#000000"/>
<rect x="52" y="150" width="1" height="29" fill="#00ff00"/>
<rect x="50" y="170" width="5" height="3" fill="#00ff00"/>
<rect x="51" y="171" width="3" height="1" fill="#ffffff"/>
<rect x="60" y="166" width="1" height="20" fill="#00ff00"/>
<rect x="58" y="171" width="5" height="6" fill="#00ff00"/>
<rect x="59" y="172" width="3" height="4" fill="#ffffff"/>
<rect x="68" y="171" width="1" height="21" fill="#00ff00"/>
<rect x="66" y="175" width="5" height="7" fill="#00ff00"/>
<rect x="67" y="176" width="3" height="5" fill="#ffffff"/>
<rect x="76" y="166" width="1" height="21" fill="#00ff00"/>
<rect x="74" y="181" width="5" height="3" fill="#00ff00"/>
<rect x="75" y="182" width="3" height="1" fill="#ffffff"/>
<rect x="84" y="156" width="1" height="36" fill="#00ff00"/>
<rect x="82" y="173" width="5" height="11" fill="#00ff00"/>
<rect x="83" y="174" width="3" height="9" fill="#000000"/>
<rect x="92" y="155" width="1" height="29" fill="#00ff00"/>
<rect x="90" y="161" width="5" height="13" fill="#00ff00"/>
<rect x="91" y="162" width="3" height="11" fill="#000000"/>
<rect x="100" y="94" width="1" height="94" fill="#00ff00"/>
<rect x="98" y="101" width="5" height="61" fill="#00ff00"/>
<rect x="99" y="102" width="3" height="59" fill="#000000"/>
<rect x="108" y="87" width="1" height="19" fill="#00ff00"/>
<rect x="106" y="101" width="5" height="5" fill="#00ff00"/>
<rect x="107" y="102" width="3" height="3" fill="#ffffff"/>
<rect x="116" y="81" width="1" height="30" fill="#00ff00"/>
<rect x="114" y="95" width="5" height="9" fill="#00ff00"/>
<rect x="115" y="96" width="3" height="7" fill="#000000"/>
<rect x="124" y="48" width="1" height="52" fill="#00ff00"/>
<rect x="122" y="59" width="5" height="37" fill="#00ff00"/>
<rect x="123" y="60" width="3" height="35" fill="#000000"/>
<rect x="132" y="55" width="1" height="79" fill="#00ff00"/>
<rect x="130" y="59" width="5" height="71" fill="#00ff00"/>
<rect x="131" y="60" width="3" height="69" fill="#ffffff"/>
<rect x="140" y="127" width="1" height="59" fill="#00ff00"/>
<rect x="138" y="129" width="5" height="42" fill="#00ff00"/>
<rect x="139" y="130" width="3" height="40" fill="#ffffff"/>
<rect x="148" y="150" width="1" height="70" fill="#00ff00"/>
<rect x="146" y="170" width="5" height="34" fill="#00ff00"/>
<rect x="147" y="171" width="3" height="32" fill="#ffffff"/>
<rect x="156" y="188" width="1" height="31" fill="#00ff00"/>
<rect x="154" y="202" width="5" height="4" fill="#00ff00"/>
<rect x="155" y="203" width="3" height="2" fill="#ffffff"/>
<rect x="164" y="151" width="1" height="68" fill="#00ff00"/>
<rect x="162" y="193" width="5" height="9" fill="#00ff00"/>
<rect x="163" y="194" width="3" height="7" fill="#000000"/>
<rect x="172" y="153" width="1" height="54" fill="#00ff00"/>
<rect x="170" y="157" width="5" height="37" fill="#00ff00"/>
<rect x="171" y="158" width="3" height="35" fill="#000000"/>
<rect x="180" y="121" width="1" height="53" fill="#00ff00"/>
<rect x="178" y="123" width="5" height="35" fill="#00ff00"/>
<rect x="179" y="124" width="3" height="33" fill="#000000"/>
<rect x="188" y="107" width="1" height="29" fill="#00ff00"/>
<rect x="186" y="108" width="5" height="16" fill="#00ff00"/>
<rect x="187" y="109" width="3" height="14" fill="#000000"/>
<rect x="196" y="69" width="1" height="54" fill="#00ff00"/>
<rect x="194" y="107" width="5" height="2" fill="#00ff00"/>
<rect x="204" y="83" width="1" height="27" fill="#00ff00"/>
<rect x="202" y="105" width="5" height="3" fill="#00ff00"/>
<rect x="203" y="106" width="3" height="1" fill="#000000"/>
<rect x="212" y="75" width="1" height="39" fill="#00ff00"/>
<rect x="210" y="103" width="5" height="3" fill="#00ff00"/>
<rect x="211" y="104" width="3" height="1" fill="#000000"/>
<rect x="220" y="85" width="1" height="29" fill="#00ff00"/>
<rect x="218" y="87" width="5" height="17" fill="#00ff00"/>
<rect x="219" y="88" width="3" height="15" fill="#000000"/>
<rect x="228" y="77" width="1" height="20" fill="#00ff00"/>
<rect x="226" y="78" width="5" height="10" fill="#00ff00"/>
<rect x="227" y="79" width="3" height="8" fill="#000000"/>
<rect x="236" y="63" width="1" height="34" fill="#00ff00"/>
<rect x="234" y="78" width="5" height="15" fill="#00ff00"/>
<rect x="235" y="79" width="3" height="13" fill="#ffffff"/>
<rect x="244" y="86" width="1" height="28" fill="#00ff00"/>
<rect x="242" y="92" width="5" height="12" fill="#00ff00"/>
<rect x="243" y="93" width="3" height="10" fill="#ffffff"/>
<rect x="252" y="98" width="1" height="31" fill="#00ff00"/>
<rect x="250" y="103" width="5" height="10" fill="#00ff00"/>
<rect x="251" y="104" width="3" height="8" fill="#ffffff"/>
<rect x="260" y="101" width="1" height="17" fill="#00ff00"/>
<rect x="258" y="105" width="5" height="8" fill="#00ff00"/>
<rect x="259" y="106" width="3" height="6" fill="#000000"/>
<rect x="268" y="99" width="1" height="24" fill="#00ff00"/>
<rect x="266" y="105" width="5" height="2" fill="#00ff00"/>
<rect x="276" y="87" width="1" height="27" fill="#00ff00"/>
<rect x="274" y="92" width="5" height="14" fill="#00ff00"/>
<rect x="275" y="93" width="3" height="12" fill="#000000"/>
<rect x="284" y="81" width="1" height="19" fill="#00ff00"/>
<rect x="282" y="91" width="5" height="2" fill="#00ff00"/>
<rect x="292" y="86" width="1" height="26" fill="#00ff00"/>
<rect x="290" y="90" width="5" height="2" fill="#00ff00"/>
<rect x="300" y="66" width="1" height="29" fill="#00ff00"/>
<rect x="298" y="72" width="5" height="20" fill="#00ff00"/>
<rect x="299" y="73" width="3" height="18" fill="#000000"/>
<rect x="308" y="66" width="1" height="22" fill="#00ff00"/>
<rect x="306" y="72" width="5" height="10" fill="#00ff00"/>
<rect x="307" y="73" width="3" height="8" fill="#ffffff"/>
<rect x="316" y="72" width="1" height="18" fill="#00ff00"/>
<rect x="314" y="81" width="5" height="3" fill="#00ff00"/>
<rect x="315" y="82" width="3" height="1" fill="#ffffff"/>
<rect x="324" y="82" width="1" height="30" fill="#00ff00"/>
<rect x="322" y="83" width="5" height="9" fill="#00ff00"/>
<rect x="323" y="84" width="3" height="7" fill="#ffffff"/>
<rect x="332" y="85" width="1" height="24" fill="#00ff00"/>
<rect x="330" y="91" width="5" height="17" fill="#00ff00"/>
<rect x="331" y="92" width="3" height="15" fill="#ffffff"/>
<rect x="340" y="87" width="1" height="98" fill="#00ff00"/>
<rect x="338" y="107" width="5" height="47" fill="#00ff00"/>
<rect x="339" y="108" width="3" height="45" fill="#ffffff"/>
<rect x="348" y="135" width="1" height="36" fill="#00ff00"/>
<rect x="346" y="141" width="5" height="13" fill="#00ff00"/>
<rect x="347" y="142" width="3" height="11" fill="#000000"/>
<rect x="356" y="133" width="1" height="32" fill="#00ff00"/>
<rect x="354" y="142" width="5" height="4" fill="#00ff00"/>
<rect x="355" y="143" width="3" height="2" fill="#ffffff"/>
<rect x="364" y="126" width="1" height="20" fill="#00ff00"/>
<rect x="362" y="143" width="5" height="3" fill="#00ff00"/>
<rect x="363" y="144" width="3" height="1" fill="#000000"/>
<rect x="372" y="107" width="1" height="49" fill="#00ff00"/>
<rect x="370" y="110" width="5" height="34" fill="#00ff00"/>
<rect x="371" y="111" width="3" height="32" fill="#000000"/>
<rect x="380" y="93" width="1" height="27" fill="#00ff00"/>
<rect x="378" y="101" width="5" height="10" fill="#00ff00"/>
<rect x="379" y="102" width="3" height="8" fill="#000000"/>
<rect x="388" y="81" width="1" height="59" fill="#00ff00"/>
<rect x="386" y="91" width="5" height="11" fill="#00ff00"/>
<rect x="387" y="92" width="3" height="9" fill="#000000"/>
<rect x="396" y="70" width="1" height="28" fill="#00ff00"/>
<rect x="394" y="87" width="5" height="5" fill="#00ff00"/>
<rect x="395" y="88" width="3" height="3" fill="#000000"/>
<rect x="404" y="73" width="1" height="29" fill="#00ff00"/>
<rect x="402" y="75" width="5" height="5" fill="#00ff00"/>
<rect x="403" y="76" width="3" height="3" fill="#ffffff"/>
<rect x="412" y="78" width="1" height="27" fill="#00ff00"/>
<rect x="410" y="79" width="5" height="26" fill="#00ff00"/>
<rect x="411" y="80" width="3" height="24" fill="#ffffff"/>
<rect x="420" y="101" width="1" height="28" fill="#00ff00"/>
<rect x="418" y="104" width="5" height="19" fill="#00ff00"/>
<rect x="419" y="105" width="3" height="17" fill="#ffffff"/>
<rect x="428" y="105" width="1" height="25" fill="#00ff00"/>
<rect x="426" y="109" width="5" height="14" fill="#00ff00"/>
<rect x="427" y="110" width="3" height="12" fill="#000000"/>
<rect x="436" y="89" width="1" height="25" fill="#00ff00"/>
<rect x="434" y="101" width="5" height="9" fill="#00ff00"/>
<rect x="435" y="102" width="3" height="7" fill="#000000"/>
<rect x="444" y="100" width="1" height="16" fill="#00ff00"/>
<rect x="442" y="101" width="5" height="14" fill="#00ff00"/>
<rect x="443" y="102" width="3" height="12" fill="#ffffff"/>
<rect x="452" y="99" width="1" height="21" fill="#00ff00"/>
<rect x="450" y="112" width="5" height="5" fill="#00ff00"/>
<rect x="451" y="113" width="3" height="3" fill="#000000"/>
<rect x="460" y="110" width="1" height="14" fill="#00ff00"/>
<rect x="458" y="112" width="5" height="12" fill="#00ff00"/>
<rect x="459" y="113" width="3" height="10" fill="#ffffff"/>
<rect x="468" y="103" width="1" height="41" fill="#00ff00"/>
<rect x="466" y="123" width="5" height="19" fill="#00ff00"/>
<rect x="467" y="124" width="3" height="17" fill="#ffffff"/>
<rect x="476" y="132" width="1" height="72" fill="#00ff00"/>
<rect x="474" y="141" width="5" height="49" fill="#00ff00"/>
<rect x="475" y="142" width="3" height="47" fill="#ffffff"/>
<rect x="484" y="185" width="1" height="46" fill="#00ff00"/>
<rect x="482" y="189" width="5" height="35" fill="#00ff00"/>
<rect x="483" y="190" width="3" height="33" fill="#ffffff"/>
<rect x="492" y="214" width="1" height="36" fill="#00ff00"/>
<rect x="490" y="223" width="5" height="25" fill="#00ff00"/>
<rect x="491" y="224" width="3" height="23" fill="#ffffff"/>
<rect x="500" y="237" width="1" height="47" fill="#00ff00"/>
<rect x="498" y="246" width="5" height="3" fill="#00ff00"/>
<rect x="499" y="247" width="3" height="1" fill="#ffffff"/>
<rect x="508" y="248" width="1" height="16" fill="#00ff00"/>
<rect x="506" y="248" width="5" height="10" fill="#00ff00"/>
<rect x="507" y="249" width="3" height="8" fill="#ffffff"/>
<rect x="516" y="234" width="1" height="52" fill="#00ff00"/>
<rect x="514" y="247" width="5" height="11" fill="#00ff00"/>
<rect x="515" y="248" width="3" height="9" fill="#000000"/>
<rect x="524" y="198" width="1" height="56" fill="#00ff00"/>
<rect x="522" y="202" width="5" height="46" fill="#00ff00"/>
<rect x="523" y="203" width="3" height="44" fill="#000000"/>
<rect x="532" y="154" width="1" height="58" fill="#00ff00"/>
<rect x="530" y="156" width="5" height="47" fill="#00ff00"/>
<rect x="531" y="157" width="3" height="45" fill="#000000"/>
<rect x="540" y="153" width="1" height="18" fill="#00ff00"/>
<rect x="538" y="157" width="5" height="1" fill="#00ff00"/>
<rect x="548" y="150" width="1" height="19" fill="#00ff00"/>
<rect x="546" y="157" width="5" height="11" fill="#00ff00"/>
<rect x="547" y="158" width="3" height="9" fill="#ffffff"/>
<rect x="556" y="165" width="1" height="12" fill="#00ff00"/>
<rect x="554" y="167" width="5" height="5" fill="#00ff00"/>
<rect x="555" y="168" width="3" height="3" fill="#ffffff"/>
<rect x="564" y="149" width="1" height="44" fill="#00ff00"/>
<rect x="562" y="171" width="5" height="10" fill="#00ff00"/>
<rect x="563" y="172" width="3" height="8" fill="#ffffff"/>
<rect x="572" y="159" width="1" height="25" fill="#00ff00"/>
<rect x="570" y="170" width="5" height="11" fill="#00ff00"/>
<rect x="571" y="171" width="3" height="9" fill="#000000"/>
<rect x="580" y="141" width="1" height="52" fill="#00ff00"/>
<rect x="578" y="170" width="5" height="14" fill="#00ff00"/>
<rect x="579" y="171" width="3" height="12" fill="#ffffff"/>
<rect x="588" y="172" width="1" height="39" fill="#00ff00"/>
<rect x="586" y="183" width="5" height="19" fill="#00ff00"/>
<rect x="587" y="184" width="3" height="17" fill="#ffffff"/>
<rect x="596" y="189" width="1" height="19" fill="#00ff00"/>
<rect x="594" y="194" width="5" height="8" fill="#00ff00"/>
<rect x="595" y="195" width="3" height="6" fill="#000000"/>
<rect x="604" y="179" width="1" height="16" fill="#00ff00"/>
<rect x="602" y="181" width="5" height="14" fill="#00ff00"/>
<rect x="603" y="182" width="3" height="12" fill="#000000"/>
<rect x="612" y="156" width="1" height="28" fill="#00ff00"/>
<rect x="610" y="175" width="5" height="7" fill="#00ff00"/>
<rect x="611" y="176" width="3" height="5" fill="#000000"/>
<rect x="620" y="166" width="1" height="32" fill="#00ff00"/>
<rect x="618" y="175" width="5" height="19" fill="#00ff00"/>
<rect x="619" y="176" width="3" height="17" fill="#ffffff"/>
<rect x="628" y="177" width="1" height="24" fill="#00ff00"/>
<rect x="626" y="191" width="5" height="3" fill="#00ff00"/>
<rect x="627" y="192" width="3" height="1" fill="#000000"/>
<rect x="636" y="185" width="1" height="28" fill="#00ff00"/>
<rect x="634" y="191" width="5" height="3" fill="#00ff00"/>
<rect x="635" y="192" width="3" height="1" fill="#ffffff"/>
<rect x="644" y="187" width="1" height="22" fill="#00ff00"/>
<rect x="642" y="197" width="5" height="2" fill="#00ff00"/>
<rect x="652" y="172" width="1" height="26" fill="#00ff00"/>
<rect x="650" y="184" width="5" height="14" fill="#00ff00"/>
<rect x="651" y="185" width="3" height="12" fill="#000000"/>
<rect x="660" y="178" width="1" height="30" fill="#00ff00"/>
<rect x="658" y="184" width="5" height="15" fill="#00ff00"/>
<rect x="659" y="185" width="3" height="13" fill="#ffffff"/>
<rect x="668" y="190" width="1" height="28" fill="#00ff00"/>
<rect x="666" y="198" width="5" height="9" fill="#00ff00"/>
<rect x="667" y="199" width="3" height="7" fill="#ffffff"/>
<rect x="676" y="204" width="1" height="37" fill="#00ff00"/>
<rect x="674" y="206" width="5" height="30" fill="#00ff00"/>
<rect x="675" y="207" width="3" height="28" fill="#ffffff"/>
<rect x="684" y="226" width="1" height="18" fill="#00ff00"/>
<rect x="682" y="228" width="5" height="8" fill="#00ff00"/>
<rect x="683" y="229" width="3" height="6" fill="#000000"/>
</g>
<polygon points="84.30,198.10 85.47,201.96 89.41,201.05 86.65,204.00 89.41,206.95 85.47,206.04 84.30,209.90 83.12,206.04 79.19,206.95 81.95,204.00 79.19,201.05 83.12,201.96" fill="#ee82ee"/>
<polygon points="92.20,212.30 102.00,223.10 102.00,226.20 94.00,217.40 94.00,234.20 90.40,234.20 90.40,217.40 82.40,226.20 82.40,223.10" fill="#ee82ee"/>
<polygon points="468.30,83.10 469.48,86.96 473.41,86.05 470.65,89.00 473.41,91.95 469.48,91.04 468.30,94.90 467.12,91.04 463.19,91.95 465.95,89.00 463.19,86.05 467.12,86.96" fill="#dcdcdc"/>
<polygon points="476.30,119.30 486.10,108.50 486.10,105.40 478.10,114.20 478.10,97.40 474.50,97.40 474.50,114.20 466.50,105.40 466.50,108.50" fill="#dcdcdc"/>
<polyline points="12.6,344.7 20.6,340.9 28,335.7 36.3,330.4 44.7,327.3 53,325.4 60.4,324.5 68.8,323 77.2,322 85.6,321 94,320.3 102.4,320.1 110.8,319.9 119.2,319.5 126.5,318 132.8,318.2 136,320 140,320.3 145.4,324.1 152.7,332.5 160,339.8 166.3,345.1 172.6,346.6 181,348.7 189.4,349.9 198.8,349.9 205,348.2 212.4,346.6 220.8,342.6 228.2,337.8 233.4,335 238.6,333.6 243.9,333.6 252.3,336.7 260.7,337.3 267,339.8 283.7,339.8 285.8,340.9 300.5,340.9 306.8,335.7 312,333.6 323.5,329.4 332.6,321.6 340.3,329.4 348.7,338.8 356,347.2 364.4,356.6 371.8,367.1 379.1,373 391.7,373 396.9,371.3 403.2,368.8 407.4,368.8 413.7,371.9 420,376.6 428.4,376.6 435.7,371.9 439.9,371.9 445.2,374.5 451.5,375.5 460.9,383.9 469.2,386 476.6,391.7 483.9,394.4 492.3,396.5 508,396.9 510.1,397.7 539.5,397.7 547.9,402.1 556.3,405.5 564.7,407.6 575.2,407.6 582.5,405.5 589.8,403.8 598.2,400.7 605.6,397.4 612.8,393.3 622.5,388.5 632,384.2 641.7,380.1 651.3,372.9 660.9,366.4 668.1,362.1 674.1,359.9 684.5,359.9" fill="none" stroke="#00ffff" stroke-width="2" stroke-linejoin="round" shape-rendering="crispEdges" clip-path="url(#c1)"/>
<polyline points="12.6,381.4 20.6,377.2 29,371.7 36.3,366 44.7,359.8 53,353.5 60.4,347.8 68.8,343 77.2,339.4 85.6,335.7 94,332.5 102.4,329.4 110.8,326.2 119.2,323.1 126.5,320.3 133.8,319.1 142.2,319.1 163,318.9 204,318.9 206.1,317.8 229.2,317.8 231.3,316.8 243.9,316.8 246,315.7 259.6,315.7 261.7,316.8 275.4,316.8 277.4,315.9 312,315.7 324.6,317.8 333,318.9 343.5,320.3 353.9,323.1 364.4,325.2 372.8,327.3 381.2,328.7 404.3,328.9 412.7,330.4 421,333.6 428.4,335.2 444.1,338.4 454.6,341.9 464,345.7 470.3,349.3 478.7,355.6 489.2,364 499.7,371.3 509.1,377.6 520.6,380.3 543.7,380.7 547.9,381.8 556.3,385.6 564.7,391.2 573.1,395.8 581.4,400.7 589.8,404.2 598.4,407 612.8,409 652.5,409 654.2,408 660.4,408 662.1,409 684.5,409" fill="none" stroke="#ffff00" stroke-width="2" stroke-linejoin="round" shape-rendering="crispEdges" clip-path="url(#c1)"/>
<polyline points="12,430.7 20,439.6 28,455.3 36,472 44,464.9 52,466.4 60,470.9 68,475.8 76,478 84,467.5 92,457 100,433.4 108,447 116,441.9 124,437 132,495.4 140,533 148,539 156,540.5 164,532.7 172,503.3 180,480.9 188,470.2 196,469.3 204,466.9 212,466.4 220,454.1 228,449 236,454.1 244,457.9 252,465.3 260,459.7 268,459.7 276,451.9 284,456.8 292,472.7 300,444.1 308,459 316,464.2 324,478.7 332,510.7 340,518.9 348,506.6 356,509.5 364,508.4 372,473.1 380,462 388,451.9 396,447 404,439.6 412,465.3 420,483.2 428,469.8 436,459.7 444,474.2 452,477.6 460,494.3 468,530 476,537.9 484,545.7 492,549.8 500,532.3 508,535.6 516,527.8 524,499.9 532,469.8 540,469.3 548,472 556,474.2 564,478.7 572,472.7 580,469.3 588,478.3 596,472.7 604,463.1 612,456.4 620,471.3 628,482 636,516.7 644,525.3 652,503 660,526.7 668,532.7 676,543.9 684,532.7" fill="none" stroke="#00ffff" stroke-width="2" stroke-linejoin="round" shape-rendering="crispEdges" clip-path="url(#c2)"/>
<polygon points="12,546 12,552 18,552" fill="#778899"/>
<polygon points="15,41 22,41 18.5,45" fill="#ffffff" shape-rendering="crispEdges"/>
<text x="27.2" y="46" font-size="10.1" fill="#ffffff" text-anchor="start" xml:space="preserve" stroke="#ffffff" stroke-width="0.1" textLength="51" lengthAdjust="spacingAndGlyphs">CADJPY,H4</text>
<text x="85.5" y="46" font-size="10.1" fill="#ffffff" text-anchor="start" xml:space="preserve" stroke="#ffffff" stroke-width="0.1" textLength="27.2" lengthAdjust="spacingAndGlyphs">79.478</text>
<text x="116.8" y="46" font-size="10.1" fill="#ffffff" text-anchor="start" xml:space="preserve" stroke="#ffffff" stroke-width="0.1" textLength="27.2" lengthAdjust="spacingAndGlyphs">79.637</text>
<text x="147.9" y="46" font-size="10.1" fill="#ffffff" text-anchor="start" xml:space="preserve" stroke="#ffffff" stroke-width="0.1" textLength="27.2" lengthAdjust="spacingAndGlyphs">79.476</text>
<text x="178.4" y="46" font-size="10.1" fill="#ffffff" text-anchor="start" xml:space="preserve" stroke="#ffffff" stroke-width="0.1" textLength="27.2" lengthAdjust="spacingAndGlyphs">79.622</text>
<text x="16.4" y="307" font-size="10.1" fill="#ffffff" text-anchor="start" xml:space="preserve" class="w" stroke="#ffffff" stroke-width="0.1" textLength="105" lengthAdjust="spacingAndGlyphs">R1(26) -86.6  R1(52) 17.4</text>
<text x="16.3" y="437" font-size="10.1" fill="#ffffff" text-anchor="start" xml:space="preserve" class="w" stroke="#ffffff" stroke-width="0.1" textLength="70.3" lengthAdjust="spacingAndGlyphs">%R(14) -78.8950</text>
<text x="692.3" y="62" font-size="10.1" fill="#ffffff" text-anchor="start" xml:space="preserve" stroke="#ffffff" stroke-width="0.1" textLength="27.6" lengthAdjust="spacingAndGlyphs">81.490</text>
<text x="692.3" y="95" font-size="10.1" fill="#ffffff" text-anchor="start" xml:space="preserve" stroke="#ffffff" stroke-width="0.1" textLength="27.6" lengthAdjust="spacingAndGlyphs">81.245</text>
<text x="692.3" y="128" font-size="10.1" fill="#ffffff" text-anchor="start" xml:space="preserve" stroke="#ffffff" stroke-width="0.1" textLength="27.6" lengthAdjust="spacingAndGlyphs">81.000</text>
<text x="692.3" y="161" font-size="10.1" fill="#ffffff" text-anchor="start" xml:space="preserve" stroke="#ffffff" stroke-width="0.1" textLength="27.6" lengthAdjust="spacingAndGlyphs">80.750</text>
<text x="692.3" y="194" font-size="10.1" fill="#ffffff" text-anchor="start" xml:space="preserve" stroke="#ffffff" stroke-width="0.1" textLength="27.6" lengthAdjust="spacingAndGlyphs">80.505</text>
<text x="692.3" y="227" font-size="10.1" fill="#ffffff" text-anchor="start" xml:space="preserve" stroke="#ffffff" stroke-width="0.1" textLength="27.6" lengthAdjust="spacingAndGlyphs">80.260</text>
<text x="692.3" y="260" font-size="10.1" fill="#ffffff" text-anchor="start" xml:space="preserve" stroke="#ffffff" stroke-width="0.1" textLength="27.6" lengthAdjust="spacingAndGlyphs">80.015</text>
<text x="692.3" y="293" font-size="10.1" fill="#ffffff" text-anchor="start" xml:space="preserve" stroke="#ffffff" stroke-width="0.1" textLength="27.6" lengthAdjust="spacingAndGlyphs">79.765</text>
<text x="689.5" y="305" font-size="10.1" fill="#ffffff" text-anchor="start" xml:space="preserve" stroke="#ffffff" stroke-width="0.1" textLength="15" lengthAdjust="spacingAndGlyphs">120</text>
<text x="689.0" y="311" font-size="10.1" fill="#ffffff" text-anchor="start" xml:space="preserve" stroke="#ffffff" stroke-width="0.1" textLength="15" lengthAdjust="spacingAndGlyphs">100</text>
<text x="689.2" y="322" font-size="10.1" fill="#ffffff" text-anchor="start" xml:space="preserve" stroke="#ffffff" stroke-width="0.1" textLength="9.6" lengthAdjust="spacingAndGlyphs">80</text>
<text x="689.2" y="340" font-size="10.1" fill="#ffffff" text-anchor="start" xml:space="preserve" stroke="#ffffff" stroke-width="0.1" textLength="9.7" lengthAdjust="spacingAndGlyphs">50</text>
<text x="690.2" y="368" font-size="10.1" fill="#ffffff" text-anchor="start" xml:space="preserve" stroke="#ffffff" stroke-width="0.1" textLength="17.6" lengthAdjust="spacingAndGlyphs">0.00</text>
<text x="688.8" y="397" font-size="10.1" fill="#ffffff" text-anchor="start" xml:space="preserve" stroke="#ffffff" stroke-width="0.1" textLength="13" lengthAdjust="spacingAndGlyphs">-50</text>
<text x="688.8" y="414" font-size="10.1" fill="#ffffff" text-anchor="start" xml:space="preserve" stroke="#ffffff" stroke-width="0.1" textLength="13" lengthAdjust="spacingAndGlyphs">-80</text>
<text x="689.5" y="419" font-size="10.1" fill="#ffffff" text-anchor="start" xml:space="preserve" stroke="#ffffff" stroke-width="0.1" textLength="18" lengthAdjust="spacingAndGlyphs">-100</text>
<text x="690.2" y="435" font-size="10.1" fill="#ffffff" text-anchor="start" xml:space="preserve" stroke="#ffffff" stroke-width="0.1" textLength="5" lengthAdjust="spacingAndGlyphs">0</text>
<text x="689.1" y="455" font-size="10.1" fill="#ffffff" text-anchor="start" xml:space="preserve" stroke="#ffffff" stroke-width="0.1" textLength="13" lengthAdjust="spacingAndGlyphs">-20</text>
<text x="689.1" y="480" font-size="10.1" fill="#ffffff" text-anchor="start" xml:space="preserve" stroke="#ffffff" stroke-width="0.1" textLength="13" lengthAdjust="spacingAndGlyphs">-40</text>
<text x="689.1" y="505" font-size="10.1" fill="#ffffff" text-anchor="start" xml:space="preserve" stroke="#ffffff" stroke-width="0.1" textLength="13" lengthAdjust="spacingAndGlyphs">-60</text>
<text x="689.1" y="530" font-size="10.1" fill="#ffffff" text-anchor="start" xml:space="preserve" stroke="#ffffff" stroke-width="0.1" textLength="13" lengthAdjust="spacingAndGlyphs">-80</text>
<text x="690.2" y="549" font-size="10.1" fill="#ffffff" text-anchor="start" xml:space="preserve" stroke="#ffffff" stroke-width="0.1" textLength="17.5" lengthAdjust="spacingAndGlyphs">-100</text>
<text x="11.4" y="565" font-size="10.1" fill="#ffffff" text-anchor="start" xml:space="preserve" class="w" stroke="#ffffff" stroke-width="0.1" textLength="52" lengthAdjust="spacingAndGlyphs">25 Aug 2020</text>
<text x="75.4" y="565" font-size="10.1" fill="#ffffff" text-anchor="start" xml:space="preserve" class="w" stroke="#ffffff" stroke-width="0.1" textLength="54.6" lengthAdjust="spacingAndGlyphs">27 Aug 04:00</text>
<text x="139.4" y="565" font-size="10.1" fill="#ffffff" text-anchor="start" xml:space="preserve" class="w" stroke="#ffffff" stroke-width="0.1" textLength="54.6" lengthAdjust="spacingAndGlyphs">28 Aug 12:00</text>
<text x="203.4" y="565" font-size="10.1" fill="#ffffff" text-anchor="start" xml:space="preserve" class="w" stroke="#ffffff" stroke-width="0.1" textLength="54.6" lengthAdjust="spacingAndGlyphs">31 Aug 20:00</text>
<text x="267.4" y="565" font-size="10.1" fill="#ffffff" text-anchor="start" xml:space="preserve" class="w" stroke="#ffffff" stroke-width="0.1" textLength="49.8" lengthAdjust="spacingAndGlyphs">2 Sep 04:00</text>
<text x="331.4" y="565" font-size="10.1" fill="#ffffff" text-anchor="start" xml:space="preserve" class="w" stroke="#ffffff" stroke-width="0.1" textLength="49.8" lengthAdjust="spacingAndGlyphs">3 Sep 12:00</text>
<text x="395.4" y="565" font-size="10.1" fill="#ffffff" text-anchor="start" xml:space="preserve" class="w" stroke="#ffffff" stroke-width="0.1" textLength="49.8" lengthAdjust="spacingAndGlyphs">4 Sep 20:00</text>
<text x="459.4" y="565" font-size="10.1" fill="#ffffff" text-anchor="start" xml:space="preserve" class="w" stroke="#ffffff" stroke-width="0.1" textLength="49.8" lengthAdjust="spacingAndGlyphs">8 Sep 04:00</text>
<text x="523.4" y="565" font-size="10.1" fill="#ffffff" text-anchor="start" xml:space="preserve" class="w" stroke="#ffffff" stroke-width="0.1" textLength="49.8" lengthAdjust="spacingAndGlyphs">9 Sep 12:00</text>
<text x="587.4" y="565" font-size="10.1" fill="#ffffff" text-anchor="start" xml:space="preserve" class="w" stroke="#ffffff" stroke-width="0.1" textLength="54.6" lengthAdjust="spacingAndGlyphs">10 Sep 20:00</text>
<text x="651.4" y="565" font-size="10.1" fill="#ffffff" text-anchor="start" xml:space="preserve" class="w" stroke="#ffffff" stroke-width="0.1" textLength="54.6" lengthAdjust="spacingAndGlyphs">14 Sep 04:00</text>
</svg>
</body></html>
